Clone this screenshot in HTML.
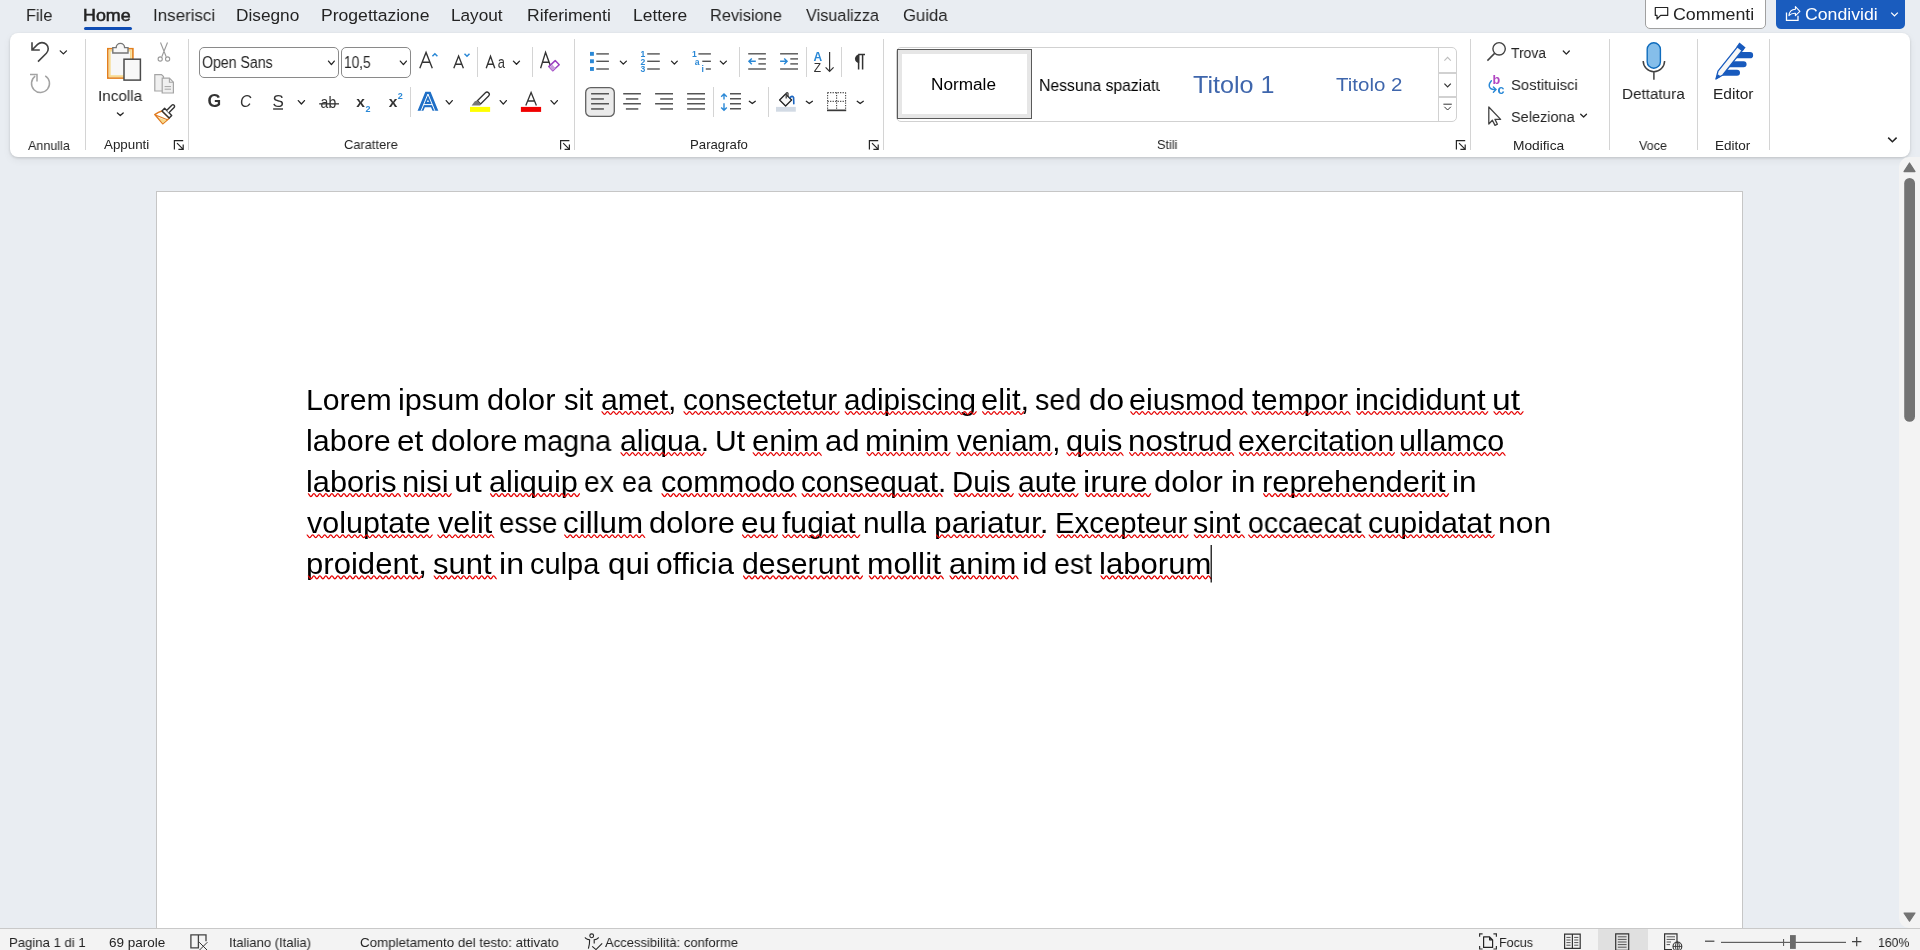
<!DOCTYPE html>
<html><head><meta charset="utf-8"><title>Word</title>
<style>
html,body{margin:0;padding:0;}
body{width:1920px;height:950px;overflow:hidden;position:relative;background:#E9EDF2;font-family:"Liberation Sans",sans-serif;}
.t{position:absolute;white-space:pre;line-height:1;transform-origin:0 0;will-change:transform;}
svg{will-change:transform}
svg{overflow:visible}
</style></head><body>
<div class="t" style="left:26.17px;top:6.74px;font-size:17.2px;color:#242424;transform:scaleX(0.9491);">File</div>
<div class="t" style="left:83.35px;top:6.74px;font-size:17.2px;color:#242424;transform:scaleX(1.0389);-webkit-text-stroke:0.55px #242424;">Home</div>
<div class="t" style="left:152.67px;top:6.74px;font-size:17.2px;color:#242424;transform:scaleX(0.9867);">Inserisci</div>
<div class="t" style="left:236.09px;top:6.74px;font-size:17.2px;color:#242424;transform:scaleX(1.0041);">Disegno</div>
<div class="t" style="left:321.07px;top:6.74px;font-size:17.2px;color:#242424;transform:scaleX(1.0221);">Progettazione</div>
<div class="t" style="left:450.60px;top:6.74px;font-size:17.2px;color:#242424;">Layout</div>
<div class="t" style="left:526.97px;top:6.74px;font-size:17.2px;color:#242424;transform:scaleX(1.0201);">Riferimenti</div>
<div class="t" style="left:632.98px;top:6.74px;font-size:17.2px;color:#242424;transform:scaleX(1.0136);">Lettere</div>
<div class="t" style="left:710.37px;top:6.74px;font-size:17.2px;color:#242424;transform:scaleX(0.9516);">Revisione</div>
<div class="t" style="left:806.16px;top:6.74px;font-size:17.2px;color:#242424;transform:scaleX(0.9474);">Visualizza</div>
<div class="t" style="left:902.57px;top:6.74px;font-size:17.2px;color:#242424;transform:scaleX(0.9723);">Guida</div>
<div style="position:absolute;left:84px;top:27px;width:48px;height:3px;border-radius:2px;background:#0F4DB4"></div>
<div style="position:absolute;left:1644.5px;top:-6px;width:119px;height:33px;border:1px solid #A0A0A0;border-radius:5px;background:#fff;box-sizing:content-box"></div>
<div class="t" style="left:1673.49px;top:6.75px;font-size:16.6px;color:#242424;transform:scaleX(1.0740);">Commenti</div>
<div style="position:absolute;left:1776px;top:-6px;width:129px;height:35px;border-radius:5px;background:#1A5CBE"></div>
<div class="t" style="left:1805.29px;top:6.75px;font-size:16.6px;color:#fff;transform:scaleX(1.0664);">Condividi</div>
<div style="position:absolute;left:10px;top:33px;width:1900px;height:124px;border-radius:8px;background:#fff;box-shadow:0 1px 3px rgba(0,0,0,0.16),0 3px 8px rgba(0,0,0,0.06)"></div>
<div style="position:absolute;left:84.5px;top:39px;width:1px;height:111px;background:#D4D4D4"></div>
<div style="position:absolute;left:188.0px;top:39px;width:1px;height:111px;background:#D4D4D4"></div>
<div style="position:absolute;left:574.0px;top:39px;width:1px;height:111px;background:#D4D4D4"></div>
<div style="position:absolute;left:882.5px;top:39px;width:1px;height:111px;background:#D4D4D4"></div>
<div style="position:absolute;left:1470.3px;top:39px;width:1px;height:111px;background:#D4D4D4"></div>
<div style="position:absolute;left:1609.2px;top:39px;width:1px;height:111px;background:#D4D4D4"></div>
<div style="position:absolute;left:1697.2px;top:39px;width:1px;height:111px;background:#D4D4D4"></div>
<div style="position:absolute;left:1769.0px;top:39px;width:1px;height:111px;background:#D4D4D4"></div>
<div style="position:absolute;left:477.1px;top:47.4px;width:1px;height:29.3px;background:#D4D4D4"></div>
<div style="position:absolute;left:531.8px;top:47.4px;width:1px;height:29.3px;background:#D4D4D4"></div>
<div style="position:absolute;left:410.0px;top:87.0px;width:1px;height:29.8px;background:#D4D4D4"></div>
<div style="position:absolute;left:739.3px;top:47.0px;width:1px;height:29.7px;background:#D4D4D4"></div>
<div style="position:absolute;left:806.3px;top:47.0px;width:1px;height:29.7px;background:#D4D4D4"></div>
<div style="position:absolute;left:841.1px;top:47.0px;width:1px;height:29.7px;background:#D4D4D4"></div>
<div style="position:absolute;left:713.1px;top:87.0px;width:1px;height:29.6px;background:#D4D4D4"></div>
<div style="position:absolute;left:768.0px;top:87.0px;width:1px;height:29.6px;background:#D4D4D4"></div>
<div class="t" style="left:27.95px;top:138.73px;font-size:13.2px;color:#242424;transform:scaleX(0.9500);">Annulla</div>
<div class="t" style="left:103.95px;top:137.73px;font-size:13.2px;color:#242424;transform:scaleX(1.0125);">Appunti</div>
<div class="t" style="left:344.17px;top:137.73px;font-size:13.2px;color:#242424;transform:scaleX(0.9758);">Carattere</div>
<div class="t" style="left:689.80px;top:137.73px;font-size:13.2px;color:#242424;">Paragrafo</div>
<div class="t" style="left:1156.72px;top:137.73px;font-size:13.2px;color:#242424;transform:scaleX(0.9646);">Stili</div>
<div class="t" style="left:1513.45px;top:138.73px;font-size:13.2px;color:#242424;transform:scaleX(1.0427);">Modifica</div>
<div class="t" style="left:1639.15px;top:138.73px;font-size:13.2px;color:#242424;transform:scaleX(0.9512);">Voce</div>
<div class="t" style="left:1715.27px;top:138.73px;font-size:13.2px;color:#242424;transform:scaleX(1.0241);">Editor</div>
<div class="t" style="left:98.17px;top:87.78px;font-size:15.5px;color:#242424;transform:scaleX(0.9839);">Incolla</div>
<div class="t" style="left:1621.77px;top:85.88px;font-size:15.5px;color:#242424;transform:scaleX(0.9832);">Dettatura</div>
<div class="t" style="left:1713.15px;top:85.88px;font-size:15.5px;color:#242424;">Editor</div>
<div style="position:absolute;left:199px;top:47px;width:138px;height:29px;border:1px solid #8A8A8A;border-radius:5px;background:#fff"></div>
<div class="t" style="left:201.64px;top:54.56px;font-size:16px;color:#242424;transform:scaleX(0.8825);">Open Sans</div>
<div style="position:absolute;left:341px;top:47px;width:68px;height:29px;border:1px solid #8A8A8A;border-radius:5px;background:#fff"></div>
<div class="t" style="left:344.18px;top:54.56px;font-size:16px;color:#242424;transform:scaleX(0.8532);">10,5</div>
<div style="position:absolute;left:895.5px;top:47px;width:559.5px;height:73px;border:1px solid #D1D1D1;border-radius:5px;background:#fff"></div>
<div style="position:absolute;left:1437.8px;top:47px;width:1px;height:74px;background:#D1D1D1"></div>
<div style="position:absolute;left:1438.5px;top:72px;width:18px;height:1.5px;background:#D1D1D1"></div>
<div style="position:absolute;left:1438.5px;top:96px;width:18px;height:1.5px;background:#D1D1D1"></div>
<div style="position:absolute;left:897px;top:49px;width:133px;height:68px;border:1px solid #5A5A5A;box-shadow:inset 0 0 0 4px #E6E6E6;background:#fff"></div>
<div class="t" style="left:931.40px;top:77.46px;font-size:16px;color:#000;transform:scaleX(1.0744);">Normale</div>
<div style="position:absolute;left:1036px;top:61px;width:123.5px;height:50px;overflow:hidden"><div class="t" style="left:2.94px;top:16.29px;font-size:16.2px;color:#000;transform:scaleX(0.9717);">Nessuna spaziatura</div></div>
<div class="t" style="left:1193.06px;top:73.99px;font-size:23.4px;color:#3F66AC;transform:scaleX(1.0747);">Titolo 1</div>
<div class="t" style="left:1335.92px;top:75.15px;font-size:19.2px;color:#3F66AC;transform:scaleX(1.0674);">Titolo 2</div>
<div class="t" style="left:1511.19px;top:45.08px;font-size:15.5px;color:#242424;transform:scaleX(0.8955);">Trova</div>
<div class="t" style="left:1510.83px;top:77.48px;font-size:15.5px;color:#242424;transform:scaleX(0.9581);">Sostituisci</div>
<div class="t" style="left:1510.85px;top:109.08px;font-size:15.5px;color:#242424;transform:scaleX(0.9347);">Seleziona</div>
<div style="position:absolute;left:156px;top:191px;width:1585px;height:800px;border:1px solid #C6C6C6;background:#fff"></div>
<div style="position:absolute;left:1899px;top:157px;width:21px;height:771px;background:#F3F3F3;border-radius:10px 0 0 10px"></div>
<svg style="position:absolute;left:1899px;top:157px" width="21" height="771"><path d="M5,14.6 L10.5,6 L16,14.6 Z" fill="#737373" stroke="#737373" stroke-width="1.2" stroke-linejoin="round"/><rect x="5.2" y="21" width="10.8" height="243.8" rx="5.4" fill="#737373"/><path d="M5,756 L10.5,764.2 L16,756 Z" fill="#737373" stroke="#737373" stroke-width="1.2" stroke-linejoin="round"/></svg>
<div style="position:absolute;left:0;top:928px;width:1920px;height:22px;background:#F3F3F3;border-top:1px solid #C9C9C9;box-sizing:border-box"></div>
<div class="t" style="left:8.93px;top:936.17px;font-size:13.5px;color:#242424;transform:scaleX(0.9734);">Pagina 1 di 1</div>
<div class="t" style="left:109.30px;top:936.17px;font-size:13.5px;color:#242424;">69 parole</div>
<div class="t" style="left:228.79px;top:936.17px;font-size:13.5px;color:#242424;transform:scaleX(0.9674);">Italiano (Italia)</div>
<div class="t" style="left:360.31px;top:936.17px;font-size:13.5px;color:#242424;transform:scaleX(0.9882);">Completamento del testo: attivato</div>
<div class="t" style="left:604.95px;top:936.17px;font-size:13.5px;color:#242424;transform:scaleX(0.9643);">Accessibilità: conforme</div>
<div class="t" style="left:1498.98px;top:936.17px;font-size:13.5px;color:#242424;transform:scaleX(0.9246);">Focus</div>
<div class="t" style="left:1877.84px;top:936.17px;font-size:13.5px;color:#242424;transform:scaleX(0.9077);">160%</div>
<div style="position:absolute;left:1598px;top:929px;width:50px;height:21px;background:#E0E0E0"></div>
<div class="t" style="left:306.30px;top:385.85px;font-size:29px;color:#000;transform:scaleX(1.0423);">Lorem</div>
<div class="t" style="left:398.34px;top:385.85px;font-size:29px;color:#000;transform:scaleX(1.0558);">ipsum</div>
<div class="t" style="left:487.23px;top:385.85px;font-size:29px;color:#000;transform:scaleX(1.0613);">dolor</div>
<div class="t" style="left:563.80px;top:385.85px;font-size:29px;color:#000;transform:scaleX(1.0036);">sit</div>
<div class="t" style="left:600.70px;top:385.85px;font-size:29px;color:#000;transform:scaleX(1.0401);">amet,</div>
<div class="t" style="left:682.71px;top:385.85px;font-size:29px;color:#000;transform:scaleX(1.0283);">consectetur</div>
<div class="t" style="left:843.92px;top:385.85px;font-size:29px;color:#000;transform:scaleX(1.0234);">adipiscing</div>
<div class="t" style="left:981.27px;top:385.85px;font-size:29px;color:#000;transform:scaleX(1.0667);">elit,</div>
<div class="t" style="left:1035.01px;top:385.85px;font-size:29px;color:#000;transform:scaleX(0.9864);">sed</div>
<div class="t" style="left:1088.69px;top:385.85px;font-size:29px;color:#000;transform:scaleX(1.0921);">do</div>
<div class="t" style="left:1129.48px;top:385.85px;font-size:29px;color:#000;transform:scaleX(1.0535);">eiusmod</div>
<div class="t" style="left:1251.52px;top:385.85px;font-size:29px;color:#000;transform:scaleX(1.0632);">tempor</div>
<div class="t" style="left:1354.62px;top:385.85px;font-size:29px;color:#000;transform:scaleX(1.0652);">incididunt</div>
<div class="t" style="left:1491.80px;top:385.85px;font-size:29px;color:#000;transform:scaleX(1.1584);">ut</div>
<div class="t" style="left:306.35px;top:426.95px;font-size:29px;color:#000;transform:scaleX(1.0517);">labore</div>
<div class="t" style="left:397.34px;top:426.95px;font-size:29px;color:#000;transform:scaleX(1.0857);">et</div>
<div class="t" style="left:430.51px;top:426.95px;font-size:29px;color:#000;transform:scaleX(1.0723);">dolore</div>
<div class="t" style="left:523.31px;top:426.95px;font-size:29px;color:#000;transform:scaleX(0.9942);">magna</div>
<div class="t" style="left:619.70px;top:426.95px;font-size:29px;color:#000;transform:scaleX(1.0423);">aliqua.</div>
<div class="t" style="left:714.57px;top:426.95px;font-size:29px;color:#000;transform:scaleX(1.0358);">Ut</div>
<div class="t" style="left:751.87px;top:426.95px;font-size:29px;color:#000;transform:scaleX(1.0637);">enim</div>
<div class="t" style="left:824.86px;top:426.95px;font-size:29px;color:#000;transform:scaleX(1.0703);">ad</div>
<div class="t" style="left:864.93px;top:426.95px;font-size:29px;color:#000;transform:scaleX(1.0912);">minim</div>
<div class="t" style="left:956.70px;top:426.95px;font-size:29px;color:#000;transform:scaleX(1.0177);">veniam,</div>
<div class="t" style="left:1065.73px;top:426.95px;font-size:29px;color:#000;transform:scaleX(1.0599);">quis</div>
<div class="t" style="left:1127.55px;top:426.95px;font-size:29px;color:#000;transform:scaleX(1.0780);">nostrud</div>
<div class="t" style="left:1238.08px;top:426.95px;font-size:29px;color:#000;transform:scaleX(1.0527);">exercitation</div>
<div class="t" style="left:1399.00px;top:426.95px;font-size:29px;color:#000;transform:scaleX(1.0527);">ullamco</div>
<div class="t" style="left:306.33px;top:468.05px;font-size:29px;color:#000;transform:scaleX(1.0600);">laboris</div>
<div class="t" style="left:402.17px;top:468.05px;font-size:29px;color:#000;transform:scaleX(1.0694);">nisi</div>
<div class="t" style="left:453.53px;top:468.05px;font-size:29px;color:#000;transform:scaleX(1.1403);">ut</div>
<div class="t" style="left:489.18px;top:468.05px;font-size:29px;color:#000;transform:scaleX(1.0596);">aliquip</div>
<div class="t" style="left:584.39px;top:468.05px;font-size:29px;color:#000;transform:scaleX(0.9691);">ex</div>
<div class="t" style="left:622.24px;top:468.05px;font-size:29px;color:#000;transform:scaleX(0.9275);">ea</div>
<div class="t" style="left:660.68px;top:468.05px;font-size:29px;color:#000;transform:scaleX(1.0549);">commodo</div>
<div class="t" style="left:800.82px;top:468.05px;font-size:29px;color:#000;transform:scaleX(1.0246);">consequat.</div>
<div class="t" style="left:951.93px;top:468.05px;font-size:29px;color:#000;transform:scaleX(1.0092);">Duis</div>
<div class="t" style="left:1017.70px;top:468.05px;font-size:29px;color:#000;transform:scaleX(1.0427);">aute</div>
<div class="t" style="left:1083.43px;top:468.05px;font-size:29px;color:#000;transform:scaleX(1.1150);">irure</div>
<div class="t" style="left:1153.72px;top:468.05px;font-size:29px;color:#000;transform:scaleX(1.0660);">dolor</div>
<div class="t" style="left:1230.89px;top:468.05px;font-size:29px;color:#000;transform:scaleX(1.0827);">in</div>
<div class="t" style="left:1261.58px;top:468.05px;font-size:29px;color:#000;transform:scaleX(1.0646);">reprehenderit</div>
<div class="t" style="left:1452.38px;top:468.05px;font-size:29px;color:#000;transform:scaleX(1.0880);">in</div>
<div class="t" style="left:307.09px;top:509.15px;font-size:29px;color:#000;transform:scaleX(1.0507);">voluptate</div>
<div class="t" style="left:437.69px;top:509.15px;font-size:29px;color:#000;transform:scaleX(1.0517);">velit</div>
<div class="t" style="left:498.81px;top:509.15px;font-size:29px;color:#000;transform:scaleX(0.9515);">esse</div>
<div class="t" style="left:563.35px;top:509.15px;font-size:29px;color:#000;transform:scaleX(1.0810);">cillum</div>
<div class="t" style="left:648.52px;top:509.15px;font-size:29px;color:#000;transform:scaleX(1.0672);">dolore</div>
<div class="t" style="left:741.13px;top:509.15px;font-size:29px;color:#000;transform:scaleX(1.0928);">eu</div>
<div class="t" style="left:782.28px;top:509.15px;font-size:29px;color:#000;transform:scaleX(1.0391);">fugiat</div>
<div class="t" style="left:863.45px;top:509.15px;font-size:29px;color:#000;transform:scaleX(1.0286);">nulla</div>
<div class="t" style="left:934.48px;top:509.15px;font-size:29px;color:#000;transform:scaleX(1.0937);">pariatur.</div>
<div class="t" style="left:1054.62px;top:509.15px;font-size:29px;color:#000;transform:scaleX(1.0129);">Excepteur</div>
<div class="t" style="left:1193.46px;top:509.15px;font-size:29px;color:#000;transform:scaleX(1.0499);">sint</div>
<div class="t" style="left:1247.53px;top:509.15px;font-size:29px;color:#000;transform:scaleX(0.9778);">occaecat</div>
<div class="t" style="left:1367.89px;top:509.15px;font-size:29px;color:#000;transform:scaleX(1.0512);">cupidatat</div>
<div class="t" style="left:1497.71px;top:509.15px;font-size:29px;color:#000;transform:scaleX(1.1009);">non</div>
<div class="t" style="left:306.42px;top:550.25px;font-size:29px;color:#000;transform:scaleX(1.0720);">proident,</div>
<div class="t" style="left:433.34px;top:550.25px;font-size:29px;color:#000;transform:scaleX(1.0688);">sunt</div>
<div class="t" style="left:498.64px;top:550.25px;font-size:29px;color:#000;transform:scaleX(1.1093);">in</div>
<div class="t" style="left:529.95px;top:550.25px;font-size:29px;color:#000;">culpa</div>
<div class="t" style="left:607.70px;top:550.25px;font-size:29px;color:#000;transform:scaleX(1.0802);">qui</div>
<div class="t" style="left:655.76px;top:550.25px;font-size:29px;color:#000;transform:scaleX(1.0344);">officia</div>
<div class="t" style="left:742.25px;top:550.25px;font-size:29px;color:#000;transform:scaleX(1.0426);">deserunt</div>
<div class="t" style="left:867.22px;top:550.25px;font-size:29px;color:#000;transform:scaleX(1.0938);">mollit</div>
<div class="t" style="left:948.66px;top:550.25px;font-size:29px;color:#000;transform:scaleX(1.0704);">anim</div>
<div class="t" style="left:1021.54px;top:550.25px;font-size:29px;color:#000;transform:scaleX(1.1333);">id</div>
<div class="t" style="left:1053.78px;top:550.25px;font-size:29px;color:#000;transform:scaleX(0.9799);">est</div>
<div class="t" style="left:1098.91px;top:550.25px;font-size:29px;color:#000;transform:scaleX(1.0723);">laborum</div>
<svg style="position:absolute;left:0;top:0" width="1920" height="950"><path fill="none" stroke="#E60000" stroke-width="1.25" d="M601.5,411.50C603.0,411.50 603.0,414.40 604.5,414.40C606.0,414.40 606.0,411.50 607.5,411.50C609.0,411.50 609.0,414.40 610.5,414.40C612.0,414.40 612.0,411.50 613.5,411.50C615.0,411.50 615.0,414.40 616.5,414.40C618.0,414.40 618.0,411.50 619.5,411.50C621.0,411.50 621.0,414.40 622.5,414.40C624.0,414.40 624.0,411.50 625.5,411.50C627.0,411.50 627.0,414.40 628.5,414.40C630.0,414.40 630.0,411.50 631.5,411.50C633.0,411.50 633.0,414.40 634.5,414.40C636.0,414.40 636.0,411.50 637.5,411.50C639.0,411.50 639.0,414.40 640.5,414.40C642.0,414.40 642.0,411.50 643.5,411.50C645.0,411.50 645.0,414.40 646.5,414.40C648.0,414.40 648.0,411.50 649.5,411.50C651.0,411.50 651.0,414.40 652.5,414.40C654.0,414.40 654.0,411.50 655.5,411.50C657.0,411.50 657.0,414.40 658.5,414.40C660.0,414.40 660.0,411.50 661.5,411.50C663.0,411.50 663.0,414.40 664.5,414.40C666.0,414.40 666.0,411.50 667.5,411.50C669.0,411.50 669.0,414.40 670.5,414.40M683.5,411.50C685.0,411.50 685.0,414.40 686.5,414.40C688.0,414.40 688.0,411.50 689.5,411.50C691.0,411.50 691.0,414.40 692.5,414.40C694.0,414.40 694.0,411.50 695.5,411.50C697.0,411.50 697.0,414.40 698.5,414.40C700.0,414.40 700.0,411.50 701.5,411.50C703.0,411.50 703.0,414.40 704.5,414.40C706.0,414.40 706.0,411.50 707.5,411.50C709.0,411.50 709.0,414.40 710.5,414.40C712.0,414.40 712.0,411.50 713.5,411.50C715.0,411.50 715.0,414.40 716.5,414.40C718.0,414.40 718.0,411.50 719.5,411.50C721.0,411.50 721.0,414.40 722.5,414.40C724.0,414.40 724.0,411.50 725.5,411.50C727.0,411.50 727.0,414.40 728.5,414.40C730.0,414.40 730.0,411.50 731.5,411.50C733.0,411.50 733.0,414.40 734.5,414.40C736.0,414.40 736.0,411.50 737.5,411.50C739.0,411.50 739.0,414.40 740.5,414.40C742.0,414.40 742.0,411.50 743.5,411.50C745.0,411.50 745.0,414.40 746.5,414.40C748.0,414.40 748.0,411.50 749.5,411.50C751.0,411.50 751.0,414.40 752.5,414.40C754.0,414.40 754.0,411.50 755.5,411.50C757.0,411.50 757.0,414.40 758.5,414.40C760.0,414.40 760.0,411.50 761.5,411.50C763.0,411.50 763.0,414.40 764.5,414.40C766.0,414.40 766.0,411.50 767.5,411.50C769.0,411.50 769.0,414.40 770.5,414.40C772.0,414.40 772.0,411.50 773.5,411.50C775.0,411.50 775.0,414.40 776.5,414.40C778.0,414.40 778.0,411.50 779.5,411.50C781.0,411.50 781.0,414.40 782.5,414.40C784.0,414.40 784.0,411.50 785.5,411.50C787.0,411.50 787.0,414.40 788.5,414.40C790.0,414.40 790.0,411.50 791.5,411.50C793.0,411.50 793.0,414.40 794.5,414.40C796.0,414.40 796.0,411.50 797.5,411.50C799.0,411.50 799.0,414.40 800.5,414.40C802.0,414.40 802.0,411.50 803.5,411.50C805.0,411.50 805.0,414.40 806.5,414.40C808.0,414.40 808.0,411.50 809.5,411.50C811.0,411.50 811.0,414.40 812.5,414.40C814.0,414.40 814.0,411.50 815.5,411.50C817.0,411.50 817.0,414.40 818.5,414.40C820.0,414.40 820.0,411.50 821.5,411.50C823.0,411.50 823.0,414.40 824.5,414.40C826.0,414.40 826.0,411.50 827.5,411.50C829.0,411.50 829.0,414.40 830.5,414.40C832.0,414.40 832.0,411.50 833.5,411.50C835.0,411.50 835.0,414.40 836.5,414.40C838.0,414.40 838.0,411.50 839.5,411.50M844.7,411.50C846.2,411.50 846.2,414.40 847.7,414.40C849.2,414.40 849.2,411.50 850.7,411.50C852.2,411.50 852.2,414.40 853.7,414.40C855.2,414.40 855.2,411.50 856.7,411.50C858.2,411.50 858.2,414.40 859.7,414.40C861.2,414.40 861.2,411.50 862.7,411.50C864.2,411.50 864.2,414.40 865.7,414.40C867.2,414.40 867.2,411.50 868.7,411.50C870.2,411.50 870.2,414.40 871.7,414.40C873.2,414.40 873.2,411.50 874.7,411.50C876.2,411.50 876.2,414.40 877.7,414.40C879.2,414.40 879.2,411.50 880.7,411.50C882.2,411.50 882.2,414.40 883.7,414.40C885.2,414.40 885.2,411.50 886.7,411.50C888.2,411.50 888.2,414.40 889.7,414.40C891.2,414.40 891.2,411.50 892.7,411.50C894.2,411.50 894.2,414.40 895.7,414.40C897.2,414.40 897.2,411.50 898.7,411.50C900.2,411.50 900.2,414.40 901.7,414.40C903.2,414.40 903.2,411.50 904.7,411.50C906.2,411.50 906.2,414.40 907.7,414.40C909.2,414.40 909.2,411.50 910.7,411.50C912.2,411.50 912.2,414.40 913.7,414.40C915.2,414.40 915.2,411.50 916.7,411.50C918.2,411.50 918.2,414.40 919.7,414.40C921.2,414.40 921.2,411.50 922.7,411.50C924.2,411.50 924.2,414.40 925.7,414.40C927.2,414.40 927.2,411.50 928.7,411.50C930.2,411.50 930.2,414.40 931.7,414.40C933.2,414.40 933.2,411.50 934.7,411.50C936.2,411.50 936.2,414.40 937.7,414.40C939.2,414.40 939.2,411.50 940.7,411.50C942.2,411.50 942.2,414.40 943.7,414.40C945.2,414.40 945.2,411.50 946.7,411.50C948.2,411.50 948.2,414.40 949.7,414.40C951.2,414.40 951.2,411.50 952.7,411.50C954.2,411.50 954.2,414.40 955.7,414.40C957.2,414.40 957.2,411.50 958.7,411.50C960.2,411.50 960.2,414.40 961.7,414.40C963.2,414.40 963.2,411.50 964.7,411.50C966.2,411.50 966.2,414.40 967.7,414.40C969.2,414.40 969.2,411.50 970.7,411.50C972.2,411.50 972.2,414.40 973.7,414.40C975.2,414.40 975.2,411.50 976.7,411.50M982.1,411.50C983.6,411.50 983.6,414.40 985.1,414.40C986.6,414.40 986.6,411.50 988.1,411.50C989.6,411.50 989.6,414.40 991.1,414.40C992.6,414.40 992.6,411.50 994.1,411.50C995.6,411.50 995.6,414.40 997.1,414.40C998.6,414.40 998.6,411.50 1000.1,411.50C1001.6,411.50 1001.6,414.40 1003.1,414.40C1004.6,414.40 1004.6,411.50 1006.1,411.50C1007.6,411.50 1007.6,414.40 1009.1,414.40C1010.6,414.40 1010.6,411.50 1012.1,411.50C1013.6,411.50 1013.6,414.40 1015.1,414.40C1016.6,414.40 1016.6,411.50 1018.1,411.50C1019.6,411.50 1019.6,414.40 1021.1,414.40C1022.6,414.40 1022.6,411.50 1024.1,411.50M1130.3,411.50C1131.8,411.50 1131.8,414.40 1133.3,414.40C1134.8,414.40 1134.8,411.50 1136.3,411.50C1137.8,411.50 1137.8,414.40 1139.3,414.40C1140.8,414.40 1140.8,411.50 1142.3,411.50C1143.8,411.50 1143.8,414.40 1145.3,414.40C1146.8,414.40 1146.8,411.50 1148.3,411.50C1149.8,411.50 1149.8,414.40 1151.3,414.40C1152.8,414.40 1152.8,411.50 1154.3,411.50C1155.8,411.50 1155.8,414.40 1157.3,414.40C1158.8,414.40 1158.8,411.50 1160.3,411.50C1161.8,411.50 1161.8,414.40 1163.3,414.40C1164.8,414.40 1164.8,411.50 1166.3,411.50C1167.8,411.50 1167.8,414.40 1169.3,414.40C1170.8,414.40 1170.8,411.50 1172.3,411.50C1173.8,411.50 1173.8,414.40 1175.3,414.40C1176.8,414.40 1176.8,411.50 1178.3,411.50C1179.8,411.50 1179.8,414.40 1181.3,414.40C1182.8,414.40 1182.8,411.50 1184.3,411.50C1185.8,411.50 1185.8,414.40 1187.3,414.40C1188.8,414.40 1188.8,411.50 1190.3,411.50C1191.8,411.50 1191.8,414.40 1193.3,414.40C1194.8,414.40 1194.8,411.50 1196.3,411.50C1197.8,411.50 1197.8,414.40 1199.3,414.40C1200.8,414.40 1200.8,411.50 1202.3,411.50C1203.8,411.50 1203.8,414.40 1205.3,414.40C1206.8,414.40 1206.8,411.50 1208.3,411.50C1209.8,411.50 1209.8,414.40 1211.3,414.40C1212.8,414.40 1212.8,411.50 1214.3,411.50C1215.8,411.50 1215.8,414.40 1217.3,414.40C1218.8,414.40 1218.8,411.50 1220.3,411.50C1221.8,411.50 1221.8,414.40 1223.3,414.40C1224.8,414.40 1224.8,411.50 1226.3,411.50C1227.8,411.50 1227.8,414.40 1229.3,414.40C1230.8,414.40 1230.8,411.50 1232.3,411.50C1233.8,411.50 1233.8,414.40 1235.3,414.40C1236.8,414.40 1236.8,411.50 1238.3,411.50C1239.8,411.50 1239.8,414.40 1241.3,414.40C1242.8,414.40 1242.8,411.50 1244.3,411.50C1245.8,411.50 1245.8,414.40 1247.3,414.40M1251.5,411.50C1253.0,411.50 1253.0,414.40 1254.5,414.40C1256.0,414.40 1256.0,411.50 1257.5,411.50C1259.0,411.50 1259.0,414.40 1260.5,414.40C1262.0,414.40 1262.0,411.50 1263.5,411.50C1265.0,411.50 1265.0,414.40 1266.5,414.40C1268.0,414.40 1268.0,411.50 1269.5,411.50C1271.0,411.50 1271.0,414.40 1272.5,414.40C1274.0,414.40 1274.0,411.50 1275.5,411.50C1277.0,411.50 1277.0,414.40 1278.5,414.40C1280.0,414.40 1280.0,411.50 1281.5,411.50C1283.0,411.50 1283.0,414.40 1284.5,414.40C1286.0,414.40 1286.0,411.50 1287.5,411.50C1289.0,411.50 1289.0,414.40 1290.5,414.40C1292.0,414.40 1292.0,411.50 1293.5,411.50C1295.0,411.50 1295.0,414.40 1296.5,414.40C1298.0,414.40 1298.0,411.50 1299.5,411.50C1301.0,411.50 1301.0,414.40 1302.5,414.40C1304.0,414.40 1304.0,411.50 1305.5,411.50C1307.0,411.50 1307.0,414.40 1308.5,414.40C1310.0,414.40 1310.0,411.50 1311.5,411.50C1313.0,411.50 1313.0,414.40 1314.5,414.40C1316.0,414.40 1316.0,411.50 1317.5,411.50C1319.0,411.50 1319.0,414.40 1320.5,414.40C1322.0,414.40 1322.0,411.50 1323.5,411.50C1325.0,411.50 1325.0,414.40 1326.5,414.40C1328.0,414.40 1328.0,411.50 1329.5,411.50C1331.0,411.50 1331.0,414.40 1332.5,414.40C1334.0,414.40 1334.0,411.50 1335.5,411.50C1337.0,411.50 1337.0,414.40 1338.5,414.40C1340.0,414.40 1340.0,411.50 1341.5,411.50C1343.0,411.50 1343.0,414.40 1344.5,414.40C1346.0,414.40 1346.0,411.50 1347.5,411.50C1349.0,411.50 1349.0,414.40 1350.5,414.40M1356.2,411.50C1357.7,411.50 1357.7,414.40 1359.2,414.40C1360.7,414.40 1360.7,411.50 1362.2,411.50C1363.7,411.50 1363.7,414.40 1365.2,414.40C1366.7,414.40 1366.7,411.50 1368.2,411.50C1369.7,411.50 1369.7,414.40 1371.2,414.40C1372.7,414.40 1372.7,411.50 1374.2,411.50C1375.7,411.50 1375.7,414.40 1377.2,414.40C1378.7,414.40 1378.7,411.50 1380.2,411.50C1381.7,411.50 1381.7,414.40 1383.2,414.40C1384.7,414.40 1384.7,411.50 1386.2,411.50C1387.7,411.50 1387.7,414.40 1389.2,414.40C1390.7,414.40 1390.7,411.50 1392.2,411.50C1393.7,411.50 1393.7,414.40 1395.2,414.40C1396.7,414.40 1396.7,411.50 1398.2,411.50C1399.7,411.50 1399.7,414.40 1401.2,414.40C1402.7,414.40 1402.7,411.50 1404.2,411.50C1405.7,411.50 1405.7,414.40 1407.2,414.40C1408.7,414.40 1408.7,411.50 1410.2,411.50C1411.7,411.50 1411.7,414.40 1413.2,414.40C1414.7,414.40 1414.7,411.50 1416.2,411.50C1417.7,411.50 1417.7,414.40 1419.2,414.40C1420.7,414.40 1420.7,411.50 1422.2,411.50C1423.7,411.50 1423.7,414.40 1425.2,414.40C1426.7,414.40 1426.7,411.50 1428.2,411.50C1429.7,411.50 1429.7,414.40 1431.2,414.40C1432.7,414.40 1432.7,411.50 1434.2,411.50C1435.7,411.50 1435.7,414.40 1437.2,414.40C1438.7,414.40 1438.7,411.50 1440.2,411.50C1441.7,411.50 1441.7,414.40 1443.2,414.40C1444.7,414.40 1444.7,411.50 1446.2,411.50C1447.7,411.50 1447.7,414.40 1449.2,414.40C1450.7,414.40 1450.7,411.50 1452.2,411.50C1453.7,411.50 1453.7,414.40 1455.2,414.40C1456.7,414.40 1456.7,411.50 1458.2,411.50C1459.7,411.50 1459.7,414.40 1461.2,414.40C1462.7,414.40 1462.7,411.50 1464.2,411.50C1465.7,411.50 1465.7,414.40 1467.2,414.40C1468.7,414.40 1468.7,411.50 1470.2,411.50C1471.7,411.50 1471.7,414.40 1473.2,414.40C1474.7,414.40 1474.7,411.50 1476.2,411.50C1477.7,411.50 1477.7,414.40 1479.2,414.40C1480.7,414.40 1480.7,411.50 1482.2,411.50C1483.7,411.50 1483.7,414.40 1485.2,414.40C1486.7,414.40 1486.7,411.50 1488.2,411.50M1493.5,411.50C1495.0,411.50 1495.0,414.40 1496.5,414.40C1498.0,414.40 1498.0,411.50 1499.5,411.50C1501.0,411.50 1501.0,414.40 1502.5,414.40C1504.0,414.40 1504.0,411.50 1505.5,411.50C1507.0,411.50 1507.0,414.40 1508.5,414.40C1510.0,414.40 1510.0,411.50 1511.5,411.50C1513.0,411.50 1513.0,414.40 1514.5,414.40C1516.0,414.40 1516.0,411.50 1517.5,411.50C1519.0,411.50 1519.0,414.40 1520.5,414.40C1522.0,414.40 1522.0,411.50 1523.5,411.50M620.5,452.60C622.0,452.60 622.0,455.50 623.5,455.50C625.0,455.50 625.0,452.60 626.5,452.60C628.0,452.60 628.0,455.50 629.5,455.50C631.0,455.50 631.0,452.60 632.5,452.60C634.0,452.60 634.0,455.50 635.5,455.50C637.0,455.50 637.0,452.60 638.5,452.60C640.0,452.60 640.0,455.50 641.5,455.50C643.0,455.50 643.0,452.60 644.5,452.60C646.0,452.60 646.0,455.50 647.5,455.50C649.0,455.50 649.0,452.60 650.5,452.60C652.0,452.60 652.0,455.50 653.5,455.50C655.0,455.50 655.0,452.60 656.5,452.60C658.0,452.60 658.0,455.50 659.5,455.50C661.0,455.50 661.0,452.60 662.5,452.60C664.0,452.60 664.0,455.50 665.5,455.50C667.0,455.50 667.0,452.60 668.5,452.60C670.0,452.60 670.0,455.50 671.5,455.50C673.0,455.50 673.0,452.60 674.5,452.60C676.0,452.60 676.0,455.50 677.5,455.50C679.0,455.50 679.0,452.60 680.5,452.60C682.0,452.60 682.0,455.50 683.5,455.50C685.0,455.50 685.0,452.60 686.5,452.60C688.0,452.60 688.0,455.50 689.5,455.50C691.0,455.50 691.0,452.60 692.5,452.60C694.0,452.60 694.0,455.50 695.5,455.50C697.0,455.50 697.0,452.60 698.5,452.60C700.0,452.60 700.0,455.50 701.5,455.50C703.0,455.50 703.0,452.60 704.5,452.60M752.7,452.60C754.2,452.60 754.2,455.50 755.7,455.50C757.2,455.50 757.2,452.60 758.7,452.60C760.2,452.60 760.2,455.50 761.7,455.50C763.2,455.50 763.2,452.60 764.7,452.60C766.2,452.60 766.2,455.50 767.7,455.50C769.2,455.50 769.2,452.60 770.7,452.60C772.2,452.60 772.2,455.50 773.7,455.50C775.2,455.50 775.2,452.60 776.7,452.60C778.2,452.60 778.2,455.50 779.7,455.50C781.2,455.50 781.2,452.60 782.7,452.60C784.2,452.60 784.2,455.50 785.7,455.50C787.2,455.50 787.2,452.60 788.7,452.60C790.2,452.60 790.2,455.50 791.7,455.50C793.2,455.50 793.2,452.60 794.7,452.60C796.2,452.60 796.2,455.50 797.7,455.50C799.2,455.50 799.2,452.60 800.7,452.60C802.2,452.60 802.2,455.50 803.7,455.50C805.2,455.50 805.2,452.60 806.7,452.60C808.2,452.60 808.2,455.50 809.7,455.50C811.2,455.50 811.2,452.60 812.7,452.60C814.2,452.60 814.2,455.50 815.7,455.50C817.2,455.50 817.2,452.60 818.7,452.60C820.2,452.60 820.2,455.50 821.7,455.50M866.5,452.60C868.0,452.60 868.0,455.50 869.5,455.50C871.0,455.50 871.0,452.60 872.5,452.60C874.0,452.60 874.0,455.50 875.5,455.50C877.0,455.50 877.0,452.60 878.5,452.60C880.0,452.60 880.0,455.50 881.5,455.50C883.0,455.50 883.0,452.60 884.5,452.60C886.0,452.60 886.0,455.50 887.5,455.50C889.0,455.50 889.0,452.60 890.5,452.60C892.0,452.60 892.0,455.50 893.5,455.50C895.0,455.50 895.0,452.60 896.5,452.60C898.0,452.60 898.0,455.50 899.5,455.50C901.0,455.50 901.0,452.60 902.5,452.60C904.0,452.60 904.0,455.50 905.5,455.50C907.0,455.50 907.0,452.60 908.5,452.60C910.0,452.60 910.0,455.50 911.5,455.50C913.0,455.50 913.0,452.60 914.5,452.60C916.0,452.60 916.0,455.50 917.5,455.50C919.0,455.50 919.0,452.60 920.5,452.60C922.0,452.60 922.0,455.50 923.5,455.50C925.0,455.50 925.0,452.60 926.5,452.60C928.0,452.60 928.0,455.50 929.5,455.50C931.0,455.50 931.0,452.60 932.5,452.60C934.0,452.60 934.0,455.50 935.5,455.50C937.0,455.50 937.0,452.60 938.5,452.60C940.0,452.60 940.0,455.50 941.5,455.50C943.0,455.50 943.0,452.60 944.5,452.60C946.0,452.60 946.0,455.50 947.5,455.50C949.0,455.50 949.0,452.60 950.5,452.60M956.3,452.60C957.8,452.60 957.8,455.50 959.3,455.50C960.8,455.50 960.8,452.60 962.3,452.60C963.8,452.60 963.8,455.50 965.3,455.50C966.8,455.50 966.8,452.60 968.3,452.60C969.8,452.60 969.8,455.50 971.3,455.50C972.8,455.50 972.8,452.60 974.3,452.60C975.8,452.60 975.8,455.50 977.3,455.50C978.8,455.50 978.8,452.60 980.3,452.60C981.8,452.60 981.8,455.50 983.3,455.50C984.8,455.50 984.8,452.60 986.3,452.60C987.8,452.60 987.8,455.50 989.3,455.50C990.8,455.50 990.8,452.60 992.3,452.60C993.8,452.60 993.8,455.50 995.3,455.50C996.8,455.50 996.8,452.60 998.3,452.60C999.8,452.60 999.8,455.50 1001.3,455.50C1002.8,455.50 1002.8,452.60 1004.3,452.60C1005.8,452.60 1005.8,455.50 1007.3,455.50C1008.8,455.50 1008.8,452.60 1010.3,452.60C1011.8,452.60 1011.8,455.50 1013.3,455.50C1014.8,455.50 1014.8,452.60 1016.3,452.60C1017.8,452.60 1017.8,455.50 1019.3,455.50C1020.8,455.50 1020.8,452.60 1022.3,452.60C1023.8,452.60 1023.8,455.50 1025.3,455.50C1026.8,455.50 1026.8,452.60 1028.3,452.60C1029.8,452.60 1029.8,455.50 1031.3,455.50C1032.8,455.50 1032.8,452.60 1034.3,452.60C1035.8,452.60 1035.8,455.50 1037.3,455.50C1038.8,455.50 1038.8,452.60 1040.3,452.60C1041.8,452.60 1041.8,455.50 1043.3,455.50C1044.8,455.50 1044.8,452.60 1046.3,452.60C1047.8,452.60 1047.8,455.50 1049.3,455.50C1050.8,455.50 1050.8,452.60 1052.3,452.60M1066.5,452.60C1068.0,452.60 1068.0,455.50 1069.5,455.50C1071.0,455.50 1071.0,452.60 1072.5,452.60C1074.0,452.60 1074.0,455.50 1075.5,455.50C1077.0,455.50 1077.0,452.60 1078.5,452.60C1080.0,452.60 1080.0,455.50 1081.5,455.50C1083.0,455.50 1083.0,452.60 1084.5,452.60C1086.0,452.60 1086.0,455.50 1087.5,455.50C1089.0,455.50 1089.0,452.60 1090.5,452.60C1092.0,452.60 1092.0,455.50 1093.5,455.50C1095.0,455.50 1095.0,452.60 1096.5,452.60C1098.0,452.60 1098.0,455.50 1099.5,455.50C1101.0,455.50 1101.0,452.60 1102.5,452.60C1104.0,452.60 1104.0,455.50 1105.5,455.50C1107.0,455.50 1107.0,452.60 1108.5,452.60C1110.0,452.60 1110.0,455.50 1111.5,455.50C1113.0,455.50 1113.0,452.60 1114.5,452.60C1116.0,452.60 1116.0,455.50 1117.5,455.50C1119.0,455.50 1119.0,452.60 1120.5,452.60C1122.0,452.60 1122.0,455.50 1123.5,455.50M1129.1,452.60C1130.6,452.60 1130.6,455.50 1132.1,455.50C1133.6,455.50 1133.6,452.60 1135.1,452.60C1136.6,452.60 1136.6,455.50 1138.1,455.50C1139.6,455.50 1139.6,452.60 1141.1,452.60C1142.6,452.60 1142.6,455.50 1144.1,455.50C1145.6,455.50 1145.6,452.60 1147.1,452.60C1148.6,452.60 1148.6,455.50 1150.1,455.50C1151.6,455.50 1151.6,452.60 1153.1,452.60C1154.6,452.60 1154.6,455.50 1156.1,455.50C1157.6,455.50 1157.6,452.60 1159.1,452.60C1160.6,452.60 1160.6,455.50 1162.1,455.50C1163.6,455.50 1163.6,452.60 1165.1,452.60C1166.6,452.60 1166.6,455.50 1168.1,455.50C1169.6,455.50 1169.6,452.60 1171.1,452.60C1172.6,452.60 1172.6,455.50 1174.1,455.50C1175.6,455.50 1175.6,452.60 1177.1,452.60C1178.6,452.60 1178.6,455.50 1180.1,455.50C1181.6,455.50 1181.6,452.60 1183.1,452.60C1184.6,452.60 1184.6,455.50 1186.1,455.50C1187.6,455.50 1187.6,452.60 1189.1,452.60C1190.6,452.60 1190.6,455.50 1192.1,455.50C1193.6,455.50 1193.6,452.60 1195.1,452.60C1196.6,452.60 1196.6,455.50 1198.1,455.50C1199.6,455.50 1199.6,452.60 1201.1,452.60C1202.6,452.60 1202.6,455.50 1204.1,455.50C1205.6,455.50 1205.6,452.60 1207.1,452.60C1208.6,452.60 1208.6,455.50 1210.1,455.50C1211.6,455.50 1211.6,452.60 1213.1,452.60C1214.6,452.60 1214.6,455.50 1216.1,455.50C1217.6,455.50 1217.6,452.60 1219.1,452.60C1220.6,452.60 1220.6,455.50 1222.1,455.50C1223.6,455.50 1223.6,452.60 1225.1,452.60C1226.6,452.60 1226.6,455.50 1228.1,455.50C1229.6,455.50 1229.6,452.60 1231.1,452.60C1232.6,452.60 1232.6,455.50 1234.1,455.50M1238.9,452.60C1240.4,452.60 1240.4,455.50 1241.9,455.50C1243.4,455.50 1243.4,452.60 1244.9,452.60C1246.4,452.60 1246.4,455.50 1247.9,455.50C1249.4,455.50 1249.4,452.60 1250.9,452.60C1252.4,452.60 1252.4,455.50 1253.9,455.50C1255.4,455.50 1255.4,452.60 1256.9,452.60C1258.4,452.60 1258.4,455.50 1259.9,455.50C1261.4,455.50 1261.4,452.60 1262.9,452.60C1264.4,452.60 1264.4,455.50 1265.9,455.50C1267.4,455.50 1267.4,452.60 1268.9,452.60C1270.4,452.60 1270.4,455.50 1271.9,455.50C1273.4,455.50 1273.4,452.60 1274.9,452.60C1276.4,452.60 1276.4,455.50 1277.9,455.50C1279.4,455.50 1279.4,452.60 1280.9,452.60C1282.4,452.60 1282.4,455.50 1283.9,455.50C1285.4,455.50 1285.4,452.60 1286.9,452.60C1288.4,452.60 1288.4,455.50 1289.9,455.50C1291.4,455.50 1291.4,452.60 1292.9,452.60C1294.4,452.60 1294.4,455.50 1295.9,455.50C1297.4,455.50 1297.4,452.60 1298.9,452.60C1300.4,452.60 1300.4,455.50 1301.9,455.50C1303.4,455.50 1303.4,452.60 1304.9,452.60C1306.4,452.60 1306.4,455.50 1307.9,455.50C1309.4,455.50 1309.4,452.60 1310.9,452.60C1312.4,452.60 1312.4,455.50 1313.9,455.50C1315.4,455.50 1315.4,452.60 1316.9,452.60C1318.4,452.60 1318.4,455.50 1319.9,455.50C1321.4,455.50 1321.4,452.60 1322.9,452.60C1324.4,452.60 1324.4,455.50 1325.9,455.50C1327.4,455.50 1327.4,452.60 1328.9,452.60C1330.4,452.60 1330.4,455.50 1331.9,455.50C1333.4,455.50 1333.4,452.60 1334.9,452.60C1336.4,452.60 1336.4,455.50 1337.9,455.50C1339.4,455.50 1339.4,452.60 1340.9,452.60C1342.4,452.60 1342.4,455.50 1343.9,455.50C1345.4,455.50 1345.4,452.60 1346.9,452.60C1348.4,452.60 1348.4,455.50 1349.9,455.50C1351.4,455.50 1351.4,452.60 1352.9,452.60C1354.4,452.60 1354.4,455.50 1355.9,455.50C1357.4,455.50 1357.4,452.60 1358.9,452.60C1360.4,452.60 1360.4,455.50 1361.9,455.50C1363.4,455.50 1363.4,452.60 1364.9,452.60C1366.4,452.60 1366.4,455.50 1367.9,455.50C1369.4,455.50 1369.4,452.60 1370.9,452.60C1372.4,452.60 1372.4,455.50 1373.9,455.50C1375.4,455.50 1375.4,452.60 1376.9,452.60C1378.4,452.60 1378.4,455.50 1379.9,455.50C1381.4,455.50 1381.4,452.60 1382.9,452.60C1384.4,452.60 1384.4,455.50 1385.9,455.50C1387.4,455.50 1387.4,452.60 1388.9,452.60C1390.4,452.60 1390.4,455.50 1391.9,455.50C1393.4,455.50 1393.4,452.60 1394.9,452.60M1400.5,452.60C1402.0,452.60 1402.0,455.50 1403.5,455.50C1405.0,455.50 1405.0,452.60 1406.5,452.60C1408.0,452.60 1408.0,455.50 1409.5,455.50C1411.0,455.50 1411.0,452.60 1412.5,452.60C1414.0,452.60 1414.0,455.50 1415.5,455.50C1417.0,455.50 1417.0,452.60 1418.5,452.60C1420.0,452.60 1420.0,455.50 1421.5,455.50C1423.0,455.50 1423.0,452.60 1424.5,452.60C1426.0,452.60 1426.0,455.50 1427.5,455.50C1429.0,455.50 1429.0,452.60 1430.5,452.60C1432.0,452.60 1432.0,455.50 1433.5,455.50C1435.0,455.50 1435.0,452.60 1436.5,452.60C1438.0,452.60 1438.0,455.50 1439.5,455.50C1441.0,455.50 1441.0,452.60 1442.5,452.60C1444.0,452.60 1444.0,455.50 1445.5,455.50C1447.0,455.50 1447.0,452.60 1448.5,452.60C1450.0,452.60 1450.0,455.50 1451.5,455.50C1453.0,455.50 1453.0,452.60 1454.5,452.60C1456.0,452.60 1456.0,455.50 1457.5,455.50C1459.0,455.50 1459.0,452.60 1460.5,452.60C1462.0,452.60 1462.0,455.50 1463.5,455.50C1465.0,455.50 1465.0,452.60 1466.5,452.60C1468.0,452.60 1468.0,455.50 1469.5,455.50C1471.0,455.50 1471.0,452.60 1472.5,452.60C1474.0,452.60 1474.0,455.50 1475.5,455.50C1477.0,455.50 1477.0,452.60 1478.5,452.60C1480.0,452.60 1480.0,455.50 1481.5,455.50C1483.0,455.50 1483.0,452.60 1484.5,452.60C1486.0,452.60 1486.0,455.50 1487.5,455.50C1489.0,455.50 1489.0,452.60 1490.5,452.60C1492.0,452.60 1492.0,455.50 1493.5,455.50C1495.0,455.50 1495.0,452.60 1496.5,452.60C1498.0,452.60 1498.0,455.50 1499.5,455.50C1501.0,455.50 1501.0,452.60 1502.5,452.60C1504.0,452.60 1504.0,455.50 1505.5,455.50M307.9,493.70C309.4,493.70 309.4,496.60 310.9,496.60C312.4,496.60 312.4,493.70 313.9,493.70C315.4,493.70 315.4,496.60 316.9,496.60C318.4,496.60 318.4,493.70 319.9,493.70C321.4,493.70 321.4,496.60 322.9,496.60C324.4,496.60 324.4,493.70 325.9,493.70C327.4,493.70 327.4,496.60 328.9,496.60C330.4,496.60 330.4,493.70 331.9,493.70C333.4,493.70 333.4,496.60 334.9,496.60C336.4,496.60 336.4,493.70 337.9,493.70C339.4,493.70 339.4,496.60 340.9,496.60C342.4,496.60 342.4,493.70 343.9,493.70C345.4,493.70 345.4,496.60 346.9,496.60C348.4,496.60 348.4,493.70 349.9,493.70C351.4,493.70 351.4,496.60 352.9,496.60C354.4,496.60 354.4,493.70 355.9,493.70C357.4,493.70 357.4,496.60 358.9,496.60C360.4,496.60 360.4,493.70 361.9,493.70C363.4,493.70 363.4,496.60 364.9,496.60C366.4,496.60 366.4,493.70 367.9,493.70C369.4,493.70 369.4,496.60 370.9,496.60C372.4,496.60 372.4,493.70 373.9,493.70C375.4,493.70 375.4,496.60 376.9,496.60C378.4,496.60 378.4,493.70 379.9,493.70C381.4,493.70 381.4,496.60 382.9,496.60C384.4,496.60 384.4,493.70 385.9,493.70C387.4,493.70 387.4,496.60 388.9,496.60C390.4,496.60 390.4,493.70 391.9,493.70C393.4,493.70 393.4,496.60 394.9,496.60C396.4,496.60 396.4,493.70 397.9,493.70C399.4,493.70 399.4,496.60 400.9,496.60M403.7,493.70C405.2,493.70 405.2,496.60 406.7,496.60C408.2,496.60 408.2,493.70 409.7,493.70C411.2,493.70 411.2,496.60 412.7,496.60C414.2,496.60 414.2,493.70 415.7,493.70C417.2,493.70 417.2,496.60 418.7,496.60C420.2,496.60 420.2,493.70 421.7,493.70C423.2,493.70 423.2,496.60 424.7,496.60C426.2,496.60 426.2,493.70 427.7,493.70C429.2,493.70 429.2,496.60 430.7,496.60C432.2,496.60 432.2,493.70 433.7,493.70C435.2,493.70 435.2,496.60 436.7,496.60C438.2,496.60 438.2,493.70 439.7,493.70C441.2,493.70 441.2,496.60 442.7,496.60C444.2,496.60 444.2,493.70 445.7,493.70C447.2,493.70 447.2,496.60 448.7,496.60C450.2,496.60 450.2,493.70 451.7,493.70M490.0,493.70C491.5,493.70 491.5,496.60 493.0,496.60C494.5,496.60 494.5,493.70 496.0,493.70C497.5,493.70 497.5,496.60 499.0,496.60C500.5,496.60 500.5,493.70 502.0,493.70C503.5,493.70 503.5,496.60 505.0,496.60C506.5,496.60 506.5,493.70 508.0,493.70C509.5,493.70 509.5,496.60 511.0,496.60C512.5,496.60 512.5,493.70 514.0,493.70C515.5,493.70 515.5,496.60 517.0,496.60C518.5,496.60 518.5,493.70 520.0,493.70C521.5,493.70 521.5,496.60 523.0,496.60C524.5,496.60 524.5,493.70 526.0,493.70C527.5,493.70 527.5,496.60 529.0,496.60C530.5,496.60 530.5,493.70 532.0,493.70C533.5,493.70 533.5,496.60 535.0,496.60C536.5,496.60 536.5,493.70 538.0,493.70C539.5,493.70 539.5,496.60 541.0,496.60C542.5,496.60 542.5,493.70 544.0,493.70C545.5,493.70 545.5,496.60 547.0,496.60C548.5,496.60 548.5,493.70 550.0,493.70C551.5,493.70 551.5,496.60 553.0,496.60C554.5,496.60 554.5,493.70 556.0,493.70C557.5,493.70 557.5,496.60 559.0,496.60C560.5,496.60 560.5,493.70 562.0,493.70C563.5,493.70 563.5,496.60 565.0,496.60C566.5,496.60 566.5,493.70 568.0,493.70C569.5,493.70 569.5,496.60 571.0,496.60C572.5,496.60 572.5,493.70 574.0,493.70C575.5,493.70 575.5,496.60 577.0,496.60C578.5,496.60 578.5,493.70 580.0,493.70M661.5,493.70C663.0,493.70 663.0,496.60 664.5,496.60C666.0,496.60 666.0,493.70 667.5,493.70C669.0,493.70 669.0,496.60 670.5,496.60C672.0,496.60 672.0,493.70 673.5,493.70C675.0,493.70 675.0,496.60 676.5,496.60C678.0,496.60 678.0,493.70 679.5,493.70C681.0,493.70 681.0,496.60 682.5,496.60C684.0,496.60 684.0,493.70 685.5,493.70C687.0,493.70 687.0,496.60 688.5,496.60C690.0,496.60 690.0,493.70 691.5,493.70C693.0,493.70 693.0,496.60 694.5,496.60C696.0,496.60 696.0,493.70 697.5,493.70C699.0,493.70 699.0,496.60 700.5,496.60C702.0,496.60 702.0,493.70 703.5,493.70C705.0,493.70 705.0,496.60 706.5,496.60C708.0,496.60 708.0,493.70 709.5,493.70C711.0,493.70 711.0,496.60 712.5,496.60C714.0,496.60 714.0,493.70 715.5,493.70C717.0,493.70 717.0,496.60 718.5,496.60C720.0,496.60 720.0,493.70 721.5,493.70C723.0,493.70 723.0,496.60 724.5,496.60C726.0,496.60 726.0,493.70 727.5,493.70C729.0,493.70 729.0,496.60 730.5,496.60C732.0,496.60 732.0,493.70 733.5,493.70C735.0,493.70 735.0,496.60 736.5,496.60C738.0,496.60 738.0,493.70 739.5,493.70C741.0,493.70 741.0,496.60 742.5,496.60C744.0,496.60 744.0,493.70 745.5,493.70C747.0,493.70 747.0,496.60 748.5,496.60C750.0,496.60 750.0,493.70 751.5,493.70C753.0,493.70 753.0,496.60 754.5,496.60C756.0,496.60 756.0,493.70 757.5,493.70C759.0,493.70 759.0,496.60 760.5,496.60C762.0,496.60 762.0,493.70 763.5,493.70C765.0,493.70 765.0,496.60 766.5,496.60C768.0,496.60 768.0,493.70 769.5,493.70C771.0,493.70 771.0,496.60 772.5,496.60C774.0,496.60 774.0,493.70 775.5,493.70C777.0,493.70 777.0,496.60 778.5,496.60C780.0,496.60 780.0,493.70 781.5,493.70C783.0,493.70 783.0,496.60 784.5,496.60C786.0,496.60 786.0,493.70 787.5,493.70C789.0,493.70 789.0,496.60 790.5,496.60C792.0,496.60 792.0,493.70 793.5,493.70C795.0,493.70 795.0,496.60 796.5,496.60M801.6,493.70C803.1,493.70 803.1,496.60 804.6,496.60C806.1,496.60 806.1,493.70 807.6,493.70C809.1,493.70 809.1,496.60 810.6,496.60C812.1,496.60 812.1,493.70 813.6,493.70C815.1,493.70 815.1,496.60 816.6,496.60C818.1,496.60 818.1,493.70 819.6,493.70C821.1,493.70 821.1,496.60 822.6,496.60C824.1,496.60 824.1,493.70 825.6,493.70C827.1,493.70 827.1,496.60 828.6,496.60C830.1,496.60 830.1,493.70 831.6,493.70C833.1,493.70 833.1,496.60 834.6,496.60C836.1,496.60 836.1,493.70 837.6,493.70C839.1,493.70 839.1,496.60 840.6,496.60C842.1,496.60 842.1,493.70 843.6,493.70C845.1,493.70 845.1,496.60 846.6,496.60C848.1,496.60 848.1,493.70 849.6,493.70C851.1,493.70 851.1,496.60 852.6,496.60C854.1,496.60 854.1,493.70 855.6,493.70C857.1,493.70 857.1,496.60 858.6,496.60C860.1,496.60 860.1,493.70 861.6,493.70C863.1,493.70 863.1,496.60 864.6,496.60C866.1,496.60 866.1,493.70 867.6,493.70C869.1,493.70 869.1,496.60 870.6,496.60C872.1,496.60 872.1,493.70 873.6,493.70C875.1,493.70 875.1,496.60 876.6,496.60C878.1,496.60 878.1,493.70 879.6,493.70C881.1,493.70 881.1,496.60 882.6,496.60C884.1,496.60 884.1,493.70 885.6,493.70C887.1,493.70 887.1,496.60 888.6,496.60C890.1,496.60 890.1,493.70 891.6,493.70C893.1,493.70 893.1,496.60 894.6,496.60C896.1,496.60 896.1,493.70 897.6,493.70C899.1,493.70 899.1,496.60 900.6,496.60C902.1,496.60 902.1,493.70 903.6,493.70C905.1,493.70 905.1,496.60 906.6,496.60C908.1,496.60 908.1,493.70 909.6,493.70C911.1,493.70 911.1,496.60 912.6,496.60C914.1,496.60 914.1,493.70 915.6,493.70C917.1,493.70 917.1,496.60 918.6,496.60C920.1,496.60 920.1,493.70 921.6,493.70C923.1,493.70 923.1,496.60 924.6,496.60C926.1,496.60 926.1,493.70 927.6,493.70C929.1,493.70 929.1,496.60 930.6,496.60C932.1,496.60 932.1,493.70 933.6,493.70C935.1,493.70 935.1,496.60 936.6,496.60C938.1,496.60 938.1,493.70 939.6,493.70C941.1,493.70 941.1,496.60 942.6,496.60M953.8,493.70C955.3,493.70 955.3,496.60 956.8,496.60C958.3,496.60 958.3,493.70 959.8,493.70C961.3,493.70 961.3,496.60 962.8,496.60C964.3,496.60 964.3,493.70 965.8,493.70C967.3,493.70 967.3,496.60 968.8,496.60C970.3,496.60 970.3,493.70 971.8,493.70C973.3,493.70 973.3,496.60 974.8,496.60C976.3,496.60 976.3,493.70 977.8,493.70C979.3,493.70 979.3,496.60 980.8,496.60C982.3,496.60 982.3,493.70 983.8,493.70C985.3,493.70 985.3,496.60 986.8,496.60C988.3,496.60 988.3,493.70 989.8,493.70C991.3,493.70 991.3,496.60 992.8,496.60C994.3,496.60 994.3,493.70 995.8,493.70C997.3,493.70 997.3,496.60 998.8,496.60C1000.3,496.60 1000.3,493.70 1001.8,493.70C1003.3,493.70 1003.3,496.60 1004.8,496.60C1006.3,496.60 1006.3,493.70 1007.8,493.70C1009.3,493.70 1009.3,496.60 1010.8,496.60C1012.3,496.60 1012.3,493.70 1013.8,493.70M1018.5,493.70C1020.0,493.70 1020.0,496.60 1021.5,496.60C1023.0,496.60 1023.0,493.70 1024.5,493.70C1026.0,493.70 1026.0,496.60 1027.5,496.60C1029.0,496.60 1029.0,493.70 1030.5,493.70C1032.0,493.70 1032.0,496.60 1033.5,496.60C1035.0,496.60 1035.0,493.70 1036.5,493.70C1038.0,493.70 1038.0,496.60 1039.5,496.60C1041.0,496.60 1041.0,493.70 1042.5,493.70C1044.0,493.70 1044.0,496.60 1045.5,496.60C1047.0,496.60 1047.0,493.70 1048.5,493.70C1050.0,493.70 1050.0,496.60 1051.5,496.60C1053.0,496.60 1053.0,493.70 1054.5,493.70C1056.0,493.70 1056.0,496.60 1057.5,496.60C1059.0,496.60 1059.0,493.70 1060.5,493.70C1062.0,493.70 1062.0,496.60 1063.5,496.60C1065.0,496.60 1065.0,493.70 1066.5,493.70C1068.0,493.70 1068.0,496.60 1069.5,496.60C1071.0,496.60 1071.0,493.70 1072.5,493.70C1074.0,493.70 1074.0,496.60 1075.5,496.60C1077.0,496.60 1077.0,493.70 1078.5,493.70M1085.1,493.70C1086.6,493.70 1086.6,496.60 1088.1,496.60C1089.6,496.60 1089.6,493.70 1091.1,493.70C1092.6,493.70 1092.6,496.60 1094.1,496.60C1095.6,496.60 1095.6,493.70 1097.1,493.70C1098.6,493.70 1098.6,496.60 1100.1,496.60C1101.6,496.60 1101.6,493.70 1103.1,493.70C1104.6,493.70 1104.6,496.60 1106.1,496.60C1107.6,496.60 1107.6,493.70 1109.1,493.70C1110.6,493.70 1110.6,496.60 1112.1,496.60C1113.6,496.60 1113.6,493.70 1115.1,493.70C1116.6,493.70 1116.6,496.60 1118.1,496.60C1119.6,496.60 1119.6,493.70 1121.1,493.70C1122.6,493.70 1122.6,496.60 1124.1,496.60C1125.6,496.60 1125.6,493.70 1127.1,493.70C1128.6,493.70 1128.6,496.60 1130.1,496.60C1131.6,496.60 1131.6,493.70 1133.1,493.70C1134.6,493.70 1134.6,496.60 1136.1,496.60C1137.6,496.60 1137.6,493.70 1139.1,493.70C1140.6,493.70 1140.6,496.60 1142.1,496.60C1143.6,496.60 1143.6,493.70 1145.1,493.70C1146.6,493.70 1146.6,496.60 1148.1,496.60C1149.6,496.60 1149.6,493.70 1151.1,493.70M1263.1,493.70C1264.6,493.70 1264.6,496.60 1266.1,496.60C1267.6,496.60 1267.6,493.70 1269.1,493.70C1270.6,493.70 1270.6,496.60 1272.1,496.60C1273.6,496.60 1273.6,493.70 1275.1,493.70C1276.6,493.70 1276.6,496.60 1278.1,496.60C1279.6,496.60 1279.6,493.70 1281.1,493.70C1282.6,493.70 1282.6,496.60 1284.1,496.60C1285.6,496.60 1285.6,493.70 1287.1,493.70C1288.6,493.70 1288.6,496.60 1290.1,496.60C1291.6,496.60 1291.6,493.70 1293.1,493.70C1294.6,493.70 1294.6,496.60 1296.1,496.60C1297.6,496.60 1297.6,493.70 1299.1,493.70C1300.6,493.70 1300.6,496.60 1302.1,496.60C1303.6,496.60 1303.6,493.70 1305.1,493.70C1306.6,493.70 1306.6,496.60 1308.1,496.60C1309.6,496.60 1309.6,493.70 1311.1,493.70C1312.6,493.70 1312.6,496.60 1314.1,496.60C1315.6,496.60 1315.6,493.70 1317.1,493.70C1318.6,493.70 1318.6,496.60 1320.1,496.60C1321.6,496.60 1321.6,493.70 1323.1,493.70C1324.6,493.70 1324.6,496.60 1326.1,496.60C1327.6,496.60 1327.6,493.70 1329.1,493.70C1330.6,493.70 1330.6,496.60 1332.1,496.60C1333.6,496.60 1333.6,493.70 1335.1,493.70C1336.6,493.70 1336.6,496.60 1338.1,496.60C1339.6,496.60 1339.6,493.70 1341.1,493.70C1342.6,493.70 1342.6,496.60 1344.1,496.60C1345.6,496.60 1345.6,493.70 1347.1,493.70C1348.6,493.70 1348.6,496.60 1350.1,496.60C1351.6,496.60 1351.6,493.70 1353.1,493.70C1354.6,493.70 1354.6,496.60 1356.1,496.60C1357.6,496.60 1357.6,493.70 1359.1,493.70C1360.6,493.70 1360.6,496.60 1362.1,496.60C1363.6,496.60 1363.6,493.70 1365.1,493.70C1366.6,493.70 1366.6,496.60 1368.1,496.60C1369.6,496.60 1369.6,493.70 1371.1,493.70C1372.6,493.70 1372.6,496.60 1374.1,496.60C1375.6,496.60 1375.6,493.70 1377.1,493.70C1378.6,493.70 1378.6,496.60 1380.1,496.60C1381.6,496.60 1381.6,493.70 1383.1,493.70C1384.6,493.70 1384.6,496.60 1386.1,496.60C1387.6,496.60 1387.6,493.70 1389.1,493.70C1390.6,493.70 1390.6,496.60 1392.1,496.60C1393.6,496.60 1393.6,493.70 1395.1,493.70C1396.6,493.70 1396.6,496.60 1398.1,496.60C1399.6,496.60 1399.6,493.70 1401.1,493.70C1402.6,493.70 1402.6,496.60 1404.1,496.60C1405.6,496.60 1405.6,493.70 1407.1,493.70C1408.6,493.70 1408.6,496.60 1410.1,496.60C1411.6,496.60 1411.6,493.70 1413.1,493.70C1414.6,493.70 1414.6,496.60 1416.1,496.60C1417.6,496.60 1417.6,493.70 1419.1,493.70C1420.6,493.70 1420.6,496.60 1422.1,496.60C1423.6,496.60 1423.6,493.70 1425.1,493.70C1426.6,493.70 1426.6,496.60 1428.1,496.60C1429.6,496.60 1429.6,493.70 1431.1,493.70C1432.6,493.70 1432.6,496.60 1434.1,496.60C1435.6,496.60 1435.6,493.70 1437.1,493.70C1438.6,493.70 1438.6,496.60 1440.1,496.60C1441.6,496.60 1441.6,493.70 1443.1,493.70C1444.6,493.70 1444.6,496.60 1446.1,496.60C1447.6,496.60 1447.6,493.70 1449.1,493.70M306.7,534.80C308.2,534.80 308.2,537.70 309.7,537.70C311.2,537.70 311.2,534.80 312.7,534.80C314.2,534.80 314.2,537.70 315.7,537.70C317.2,537.70 317.2,534.80 318.7,534.80C320.2,534.80 320.2,537.70 321.7,537.70C323.2,537.70 323.2,534.80 324.7,534.80C326.2,534.80 326.2,537.70 327.7,537.70C329.2,537.70 329.2,534.80 330.7,534.80C332.2,534.80 332.2,537.70 333.7,537.70C335.2,537.70 335.2,534.80 336.7,534.80C338.2,534.80 338.2,537.70 339.7,537.70C341.2,537.70 341.2,534.80 342.7,534.80C344.2,534.80 344.2,537.70 345.7,537.70C347.2,537.70 347.2,534.80 348.7,534.80C350.2,534.80 350.2,537.70 351.7,537.70C353.2,537.70 353.2,534.80 354.7,534.80C356.2,534.80 356.2,537.70 357.7,537.70C359.2,537.70 359.2,534.80 360.7,534.80C362.2,534.80 362.2,537.70 363.7,537.70C365.2,537.70 365.2,534.80 366.7,534.80C368.2,534.80 368.2,537.70 369.7,537.70C371.2,537.70 371.2,534.80 372.7,534.80C374.2,534.80 374.2,537.70 375.7,537.70C377.2,537.70 377.2,534.80 378.7,534.80C380.2,534.80 380.2,537.70 381.7,537.70C383.2,537.70 383.2,534.80 384.7,534.80C386.2,534.80 386.2,537.70 387.7,537.70C389.2,537.70 389.2,534.80 390.7,534.80C392.2,534.80 392.2,537.70 393.7,537.70C395.2,537.70 395.2,534.80 396.7,534.80C398.2,534.80 398.2,537.70 399.7,537.70C401.2,537.70 401.2,534.80 402.7,534.80C404.2,534.80 404.2,537.70 405.7,537.70C407.2,537.70 407.2,534.80 408.7,534.80C410.2,534.80 410.2,537.70 411.7,537.70C413.2,537.70 413.2,534.80 414.7,534.80C416.2,534.80 416.2,537.70 417.7,537.70C419.2,537.70 419.2,534.80 420.7,534.80C422.2,534.80 422.2,537.70 423.7,537.70C425.2,537.70 425.2,534.80 426.7,534.80C428.2,534.80 428.2,537.70 429.7,537.70C431.2,537.70 431.2,534.80 432.7,534.80M437.3,534.80C438.8,534.80 438.8,537.70 440.3,537.70C441.8,537.70 441.8,534.80 443.3,534.80C444.8,534.80 444.8,537.70 446.3,537.70C447.8,537.70 447.8,534.80 449.3,534.80C450.8,534.80 450.8,537.70 452.3,537.70C453.8,537.70 453.8,534.80 455.3,534.80C456.8,534.80 456.8,537.70 458.3,537.70C459.8,537.70 459.8,534.80 461.3,534.80C462.8,534.80 462.8,537.70 464.3,537.70C465.8,537.70 465.8,534.80 467.3,534.80C468.8,534.80 468.8,537.70 470.3,537.70C471.8,537.70 471.8,534.80 473.3,534.80C474.8,534.80 474.8,537.70 476.3,537.70C477.8,537.70 477.8,534.80 479.3,534.80C480.8,534.80 480.8,537.70 482.3,537.70C483.8,537.70 483.8,534.80 485.3,534.80C486.8,534.80 486.8,537.70 488.3,537.70C489.8,537.70 489.8,534.80 491.3,534.80C492.8,534.80 492.8,537.70 494.3,537.70M564.2,534.80C565.7,534.80 565.7,537.70 567.2,537.70C568.7,537.70 568.7,534.80 570.2,534.80C571.7,534.80 571.7,537.70 573.2,537.70C574.7,537.70 574.7,534.80 576.2,534.80C577.7,534.80 577.7,537.70 579.2,537.70C580.7,537.70 580.7,534.80 582.2,534.80C583.7,534.80 583.7,537.70 585.2,537.70C586.7,537.70 586.7,534.80 588.2,534.80C589.7,534.80 589.7,537.70 591.2,537.70C592.7,537.70 592.7,534.80 594.2,534.80C595.7,534.80 595.7,537.70 597.2,537.70C598.7,537.70 598.7,534.80 600.2,534.80C601.7,534.80 601.7,537.70 603.2,537.70C604.7,537.70 604.7,534.80 606.2,534.80C607.7,534.80 607.7,537.70 609.2,537.70C610.7,537.70 610.7,534.80 612.2,534.80C613.7,534.80 613.7,537.70 615.2,537.70C616.7,537.70 616.7,534.80 618.2,534.80C619.7,534.80 619.7,537.70 621.2,537.70C622.7,537.70 622.7,534.80 624.2,534.80C625.7,534.80 625.7,537.70 627.2,537.70C628.7,537.70 628.7,534.80 630.2,534.80C631.7,534.80 631.7,537.70 633.2,537.70C634.7,537.70 634.7,534.80 636.2,534.80C637.7,534.80 637.7,537.70 639.2,537.70C640.7,537.70 640.7,534.80 642.2,534.80C643.7,534.80 643.7,537.70 645.2,537.70M742.0,534.80C743.5,534.80 743.5,537.70 745.0,537.70C746.5,537.70 746.5,534.80 748.0,534.80C749.5,534.80 749.5,537.70 751.0,537.70C752.5,537.70 752.5,534.80 754.0,534.80C755.5,534.80 755.5,537.70 757.0,537.70C758.5,537.70 758.5,534.80 760.0,534.80C761.5,534.80 761.5,537.70 763.0,537.70C764.5,537.70 764.5,534.80 766.0,534.80C767.5,534.80 767.5,537.70 769.0,537.70C770.5,537.70 770.5,534.80 772.0,534.80C773.5,534.80 773.5,537.70 775.0,537.70C776.5,537.70 776.5,534.80 778.0,534.80M782.2,534.80C783.7,534.80 783.7,537.70 785.2,537.70C786.7,537.70 786.7,534.80 788.2,534.80C789.7,534.80 789.7,537.70 791.2,537.70C792.7,537.70 792.7,534.80 794.2,534.80C795.7,534.80 795.7,537.70 797.2,537.70C798.7,537.70 798.7,534.80 800.2,534.80C801.7,534.80 801.7,537.70 803.2,537.70C804.7,537.70 804.7,534.80 806.2,534.80C807.7,534.80 807.7,537.70 809.2,537.70C810.7,537.70 810.7,534.80 812.2,534.80C813.7,534.80 813.7,537.70 815.2,537.70C816.7,537.70 816.7,534.80 818.2,534.80C819.7,534.80 819.7,537.70 821.2,537.70C822.7,537.70 822.7,534.80 824.2,534.80C825.7,534.80 825.7,537.70 827.2,537.70C828.7,537.70 828.7,534.80 830.2,534.80C831.7,534.80 831.7,537.70 833.2,537.70C834.7,537.70 834.7,534.80 836.2,534.80C837.7,534.80 837.7,537.70 839.2,537.70C840.7,537.70 840.7,534.80 842.2,534.80C843.7,534.80 843.7,537.70 845.2,537.70C846.7,537.70 846.7,534.80 848.2,534.80C849.7,534.80 849.7,537.70 851.2,537.70C852.7,537.70 852.7,534.80 854.2,534.80C855.7,534.80 855.7,537.70 857.2,537.70C858.7,537.70 858.7,534.80 860.2,534.80M936.0,534.80C937.5,534.80 937.5,537.70 939.0,537.70C940.5,537.70 940.5,534.80 942.0,534.80C943.5,534.80 943.5,537.70 945.0,537.70C946.5,537.70 946.5,534.80 948.0,534.80C949.5,534.80 949.5,537.70 951.0,537.70C952.5,537.70 952.5,534.80 954.0,534.80C955.5,534.80 955.5,537.70 957.0,537.70C958.5,537.70 958.5,534.80 960.0,534.80C961.5,534.80 961.5,537.70 963.0,537.70C964.5,537.70 964.5,534.80 966.0,534.80C967.5,534.80 967.5,537.70 969.0,537.70C970.5,537.70 970.5,534.80 972.0,534.80C973.5,534.80 973.5,537.70 975.0,537.70C976.5,537.70 976.5,534.80 978.0,534.80C979.5,534.80 979.5,537.70 981.0,537.70C982.5,537.70 982.5,534.80 984.0,534.80C985.5,534.80 985.5,537.70 987.0,537.70C988.5,537.70 988.5,534.80 990.0,534.80C991.5,534.80 991.5,537.70 993.0,537.70C994.5,537.70 994.5,534.80 996.0,534.80C997.5,534.80 997.5,537.70 999.0,537.70C1000.5,537.70 1000.5,534.80 1002.0,534.80C1003.5,534.80 1003.5,537.70 1005.0,537.70C1006.5,537.70 1006.5,534.80 1008.0,534.80C1009.5,534.80 1009.5,537.70 1011.0,537.70C1012.5,537.70 1012.5,534.80 1014.0,534.80C1015.5,534.80 1015.5,537.70 1017.0,537.70C1018.5,537.70 1018.5,534.80 1020.0,534.80C1021.5,534.80 1021.5,537.70 1023.0,537.70C1024.5,537.70 1024.5,534.80 1026.0,534.80C1027.5,534.80 1027.5,537.70 1029.0,537.70C1030.5,537.70 1030.5,534.80 1032.0,534.80C1033.5,534.80 1033.5,537.70 1035.0,537.70C1036.5,537.70 1036.5,534.80 1038.0,534.80C1039.5,534.80 1039.5,537.70 1041.0,537.70C1042.5,537.70 1042.5,534.80 1044.0,534.80M1056.5,534.80C1058.0,534.80 1058.0,537.70 1059.5,537.70C1061.0,537.70 1061.0,534.80 1062.5,534.80C1064.0,534.80 1064.0,537.70 1065.5,537.70C1067.0,537.70 1067.0,534.80 1068.5,534.80C1070.0,534.80 1070.0,537.70 1071.5,537.70C1073.0,537.70 1073.0,534.80 1074.5,534.80C1076.0,534.80 1076.0,537.70 1077.5,537.70C1079.0,537.70 1079.0,534.80 1080.5,534.80C1082.0,534.80 1082.0,537.70 1083.5,537.70C1085.0,537.70 1085.0,534.80 1086.5,534.80C1088.0,534.80 1088.0,537.70 1089.5,537.70C1091.0,537.70 1091.0,534.80 1092.5,534.80C1094.0,534.80 1094.0,537.70 1095.5,537.70C1097.0,537.70 1097.0,534.80 1098.5,534.80C1100.0,534.80 1100.0,537.70 1101.5,537.70C1103.0,537.70 1103.0,534.80 1104.5,534.80C1106.0,534.80 1106.0,537.70 1107.5,537.70C1109.0,537.70 1109.0,534.80 1110.5,534.80C1112.0,534.80 1112.0,537.70 1113.5,537.70C1115.0,537.70 1115.0,534.80 1116.5,534.80C1118.0,534.80 1118.0,537.70 1119.5,537.70C1121.0,537.70 1121.0,534.80 1122.5,534.80C1124.0,534.80 1124.0,537.70 1125.5,537.70C1127.0,537.70 1127.0,534.80 1128.5,534.80C1130.0,534.80 1130.0,537.70 1131.5,537.70C1133.0,537.70 1133.0,534.80 1134.5,534.80C1136.0,534.80 1136.0,537.70 1137.5,537.70C1139.0,537.70 1139.0,534.80 1140.5,534.80C1142.0,534.80 1142.0,537.70 1143.5,537.70C1145.0,537.70 1145.0,534.80 1146.5,534.80C1148.0,534.80 1148.0,537.70 1149.5,537.70C1151.0,537.70 1151.0,534.80 1152.5,534.80C1154.0,534.80 1154.0,537.70 1155.5,537.70C1157.0,537.70 1157.0,534.80 1158.5,534.80C1160.0,534.80 1160.0,537.70 1161.5,537.70C1163.0,537.70 1163.0,534.80 1164.5,534.80C1166.0,534.80 1166.0,537.70 1167.5,537.70C1169.0,537.70 1169.0,534.80 1170.5,534.80C1172.0,534.80 1172.0,537.70 1173.5,537.70C1175.0,537.70 1175.0,534.80 1176.5,534.80C1178.0,534.80 1178.0,537.70 1179.5,537.70C1181.0,537.70 1181.0,534.80 1182.5,534.80C1184.0,534.80 1184.0,537.70 1185.5,537.70C1187.0,537.70 1187.0,534.80 1188.5,534.80M1193.8,534.80C1195.3,534.80 1195.3,537.70 1196.8,537.70C1198.3,537.70 1198.3,534.80 1199.8,534.80C1201.3,534.80 1201.3,537.70 1202.8,537.70C1204.3,537.70 1204.3,534.80 1205.8,534.80C1207.3,534.80 1207.3,537.70 1208.8,537.70C1210.3,537.70 1210.3,534.80 1211.8,534.80C1213.3,534.80 1213.3,537.70 1214.8,537.70C1216.3,537.70 1216.3,534.80 1217.8,534.80C1219.3,534.80 1219.3,537.70 1220.8,537.70C1222.3,537.70 1222.3,534.80 1223.8,534.80C1225.3,534.80 1225.3,537.70 1226.8,537.70C1228.3,537.70 1228.3,534.80 1229.8,534.80C1231.3,534.80 1231.3,537.70 1232.8,537.70C1234.3,537.70 1234.3,534.80 1235.8,534.80C1237.3,534.80 1237.3,537.70 1238.8,537.70C1240.3,537.70 1240.3,534.80 1241.8,534.80C1243.3,534.80 1243.3,537.70 1244.8,537.70M1248.2,534.80C1249.7,534.80 1249.7,537.70 1251.2,537.70C1252.7,537.70 1252.7,534.80 1254.2,534.80C1255.7,534.80 1255.7,537.70 1257.2,537.70C1258.7,537.70 1258.7,534.80 1260.2,534.80C1261.7,534.80 1261.7,537.70 1263.2,537.70C1264.7,537.70 1264.7,534.80 1266.2,534.80C1267.7,534.80 1267.7,537.70 1269.2,537.70C1270.7,537.70 1270.7,534.80 1272.2,534.80C1273.7,534.80 1273.7,537.70 1275.2,537.70C1276.7,537.70 1276.7,534.80 1278.2,534.80C1279.7,534.80 1279.7,537.70 1281.2,537.70C1282.7,537.70 1282.7,534.80 1284.2,534.80C1285.7,534.80 1285.7,537.70 1287.2,537.70C1288.7,537.70 1288.7,534.80 1290.2,534.80C1291.7,534.80 1291.7,537.70 1293.2,537.70C1294.7,537.70 1294.7,534.80 1296.2,534.80C1297.7,534.80 1297.7,537.70 1299.2,537.70C1300.7,537.70 1300.7,534.80 1302.2,534.80C1303.7,534.80 1303.7,537.70 1305.2,537.70C1306.7,537.70 1306.7,534.80 1308.2,534.80C1309.7,534.80 1309.7,537.70 1311.2,537.70C1312.7,537.70 1312.7,534.80 1314.2,534.80C1315.7,534.80 1315.7,537.70 1317.2,537.70C1318.7,537.70 1318.7,534.80 1320.2,534.80C1321.7,534.80 1321.7,537.70 1323.2,537.70C1324.7,537.70 1324.7,534.80 1326.2,534.80C1327.7,534.80 1327.7,537.70 1329.2,537.70C1330.7,537.70 1330.7,534.80 1332.2,534.80C1333.7,534.80 1333.7,537.70 1335.2,537.70C1336.7,537.70 1336.7,534.80 1338.2,534.80C1339.7,534.80 1339.7,537.70 1341.2,537.70C1342.7,537.70 1342.7,534.80 1344.2,534.80C1345.7,534.80 1345.7,537.70 1347.2,537.70C1348.7,537.70 1348.7,534.80 1350.2,534.80C1351.7,534.80 1351.7,537.70 1353.2,537.70C1354.7,537.70 1354.7,534.80 1356.2,534.80C1357.7,534.80 1357.7,537.70 1359.2,537.70C1360.7,537.70 1360.7,534.80 1362.2,534.80C1363.7,534.80 1363.7,537.70 1365.2,537.70M1368.7,534.80C1370.2,534.80 1370.2,537.70 1371.7,537.70C1373.2,537.70 1373.2,534.80 1374.7,534.80C1376.2,534.80 1376.2,537.70 1377.7,537.70C1379.2,537.70 1379.2,534.80 1380.7,534.80C1382.2,534.80 1382.2,537.70 1383.7,537.70C1385.2,537.70 1385.2,534.80 1386.7,534.80C1388.2,534.80 1388.2,537.70 1389.7,537.70C1391.2,537.70 1391.2,534.80 1392.7,534.80C1394.2,534.80 1394.2,537.70 1395.7,537.70C1397.2,537.70 1397.2,534.80 1398.7,534.80C1400.2,534.80 1400.2,537.70 1401.7,537.70C1403.2,537.70 1403.2,534.80 1404.7,534.80C1406.2,534.80 1406.2,537.70 1407.7,537.70C1409.2,537.70 1409.2,534.80 1410.7,534.80C1412.2,534.80 1412.2,537.70 1413.7,537.70C1415.2,537.70 1415.2,534.80 1416.7,534.80C1418.2,534.80 1418.2,537.70 1419.7,537.70C1421.2,537.70 1421.2,534.80 1422.7,534.80C1424.2,534.80 1424.2,537.70 1425.7,537.70C1427.2,537.70 1427.2,534.80 1428.7,534.80C1430.2,534.80 1430.2,537.70 1431.7,537.70C1433.2,537.70 1433.2,534.80 1434.7,534.80C1436.2,534.80 1436.2,537.70 1437.7,537.70C1439.2,537.70 1439.2,534.80 1440.7,534.80C1442.2,534.80 1442.2,537.70 1443.7,537.70C1445.2,537.70 1445.2,534.80 1446.7,534.80C1448.2,534.80 1448.2,537.70 1449.7,537.70C1451.2,537.70 1451.2,534.80 1452.7,534.80C1454.2,534.80 1454.2,537.70 1455.7,537.70C1457.2,537.70 1457.2,534.80 1458.7,534.80C1460.2,534.80 1460.2,537.70 1461.7,537.70C1463.2,537.70 1463.2,534.80 1464.7,534.80C1466.2,534.80 1466.2,537.70 1467.7,537.70C1469.2,537.70 1469.2,534.80 1470.7,534.80C1472.2,534.80 1472.2,537.70 1473.7,537.70C1475.2,537.70 1475.2,534.80 1476.7,534.80C1478.2,534.80 1478.2,537.70 1479.7,537.70C1481.2,537.70 1481.2,534.80 1482.7,534.80C1484.2,534.80 1484.2,537.70 1485.7,537.70C1487.2,537.70 1487.2,534.80 1488.7,534.80C1490.2,534.80 1490.2,537.70 1491.7,537.70C1493.2,537.70 1493.2,534.80 1494.7,534.80M307.9,575.90C309.4,575.90 309.4,578.80 310.9,578.80C312.4,578.80 312.4,575.90 313.9,575.90C315.4,575.90 315.4,578.80 316.9,578.80C318.4,578.80 318.4,575.90 319.9,575.90C321.4,575.90 321.4,578.80 322.9,578.80C324.4,578.80 324.4,575.90 325.9,575.90C327.4,575.90 327.4,578.80 328.9,578.80C330.4,578.80 330.4,575.90 331.9,575.90C333.4,575.90 333.4,578.80 334.9,578.80C336.4,578.80 336.4,575.90 337.9,575.90C339.4,575.90 339.4,578.80 340.9,578.80C342.4,578.80 342.4,575.90 343.9,575.90C345.4,575.90 345.4,578.80 346.9,578.80C348.4,578.80 348.4,575.90 349.9,575.90C351.4,575.90 351.4,578.80 352.9,578.80C354.4,578.80 354.4,575.90 355.9,575.90C357.4,575.90 357.4,578.80 358.9,578.80C360.4,578.80 360.4,575.90 361.9,575.90C363.4,575.90 363.4,578.80 364.9,578.80C366.4,578.80 366.4,575.90 367.9,575.90C369.4,575.90 369.4,578.80 370.9,578.80C372.4,578.80 372.4,575.90 373.9,575.90C375.4,575.90 375.4,578.80 376.9,578.80C378.4,578.80 378.4,575.90 379.9,575.90C381.4,575.90 381.4,578.80 382.9,578.80C384.4,578.80 384.4,575.90 385.9,575.90C387.4,575.90 387.4,578.80 388.9,578.80C390.4,578.80 390.4,575.90 391.9,575.90C393.4,575.90 393.4,578.80 394.9,578.80C396.4,578.80 396.4,575.90 397.9,575.90C399.4,575.90 399.4,578.80 400.9,578.80C402.4,578.80 402.4,575.90 403.9,575.90C405.4,575.90 405.4,578.80 406.9,578.80C408.4,578.80 408.4,575.90 409.9,575.90C411.4,575.90 411.4,578.80 412.9,578.80C414.4,578.80 414.4,575.90 415.9,575.90C417.4,575.90 417.4,578.80 418.9,578.80C420.4,578.80 420.4,575.90 421.9,575.90M433.7,575.90C435.2,575.90 435.2,578.80 436.7,578.80C438.2,578.80 438.2,575.90 439.7,575.90C441.2,575.90 441.2,578.80 442.7,578.80C444.2,578.80 444.2,575.90 445.7,575.90C447.2,575.90 447.2,578.80 448.7,578.80C450.2,578.80 450.2,575.90 451.7,575.90C453.2,575.90 453.2,578.80 454.7,578.80C456.2,578.80 456.2,575.90 457.7,575.90C459.2,575.90 459.2,578.80 460.7,578.80C462.2,578.80 462.2,575.90 463.7,575.90C465.2,575.90 465.2,578.80 466.7,578.80C468.2,578.80 468.2,575.90 469.7,575.90C471.2,575.90 471.2,578.80 472.7,578.80C474.2,578.80 474.2,575.90 475.7,575.90C477.2,575.90 477.2,578.80 478.7,578.80C480.2,578.80 480.2,575.90 481.7,575.90C483.2,575.90 483.2,578.80 484.7,578.80C486.2,578.80 486.2,575.90 487.7,575.90C489.2,575.90 489.2,578.80 490.7,578.80C492.2,578.80 492.2,575.90 493.7,575.90C495.2,575.90 495.2,578.80 496.7,578.80M743.0,575.90C744.5,575.90 744.5,578.80 746.0,578.80C747.5,578.80 747.5,575.90 749.0,575.90C750.5,575.90 750.5,578.80 752.0,578.80C753.5,578.80 753.5,575.90 755.0,575.90C756.5,575.90 756.5,578.80 758.0,578.80C759.5,578.80 759.5,575.90 761.0,575.90C762.5,575.90 762.5,578.80 764.0,578.80C765.5,578.80 765.5,575.90 767.0,575.90C768.5,575.90 768.5,578.80 770.0,578.80C771.5,578.80 771.5,575.90 773.0,575.90C774.5,575.90 774.5,578.80 776.0,578.80C777.5,578.80 777.5,575.90 779.0,575.90C780.5,575.90 780.5,578.80 782.0,578.80C783.5,578.80 783.5,575.90 785.0,575.90C786.5,575.90 786.5,578.80 788.0,578.80C789.5,578.80 789.5,575.90 791.0,575.90C792.5,575.90 792.5,578.80 794.0,578.80C795.5,578.80 795.5,575.90 797.0,575.90C798.5,575.90 798.5,578.80 800.0,578.80C801.5,578.80 801.5,575.90 803.0,575.90C804.5,575.90 804.5,578.80 806.0,578.80C807.5,578.80 807.5,575.90 809.0,575.90C810.5,575.90 810.5,578.80 812.0,578.80C813.5,578.80 813.5,575.90 815.0,575.90C816.5,575.90 816.5,578.80 818.0,578.80C819.5,578.80 819.5,575.90 821.0,575.90C822.5,575.90 822.5,578.80 824.0,578.80C825.5,578.80 825.5,575.90 827.0,575.90C828.5,575.90 828.5,578.80 830.0,578.80C831.5,578.80 831.5,575.90 833.0,575.90C834.5,575.90 834.5,578.80 836.0,578.80C837.5,578.80 837.5,575.90 839.0,575.90C840.5,575.90 840.5,578.80 842.0,578.80C843.5,578.80 843.5,575.90 845.0,575.90C846.5,575.90 846.5,578.80 848.0,578.80C849.5,578.80 849.5,575.90 851.0,575.90C852.5,575.90 852.5,578.80 854.0,578.80C855.5,578.80 855.5,575.90 857.0,575.90C858.5,575.90 858.5,578.80 860.0,578.80C861.5,578.80 861.5,575.90 863.0,575.90M868.8,575.90C870.3,575.90 870.3,578.80 871.8,578.80C873.3,578.80 873.3,575.90 874.8,575.90C876.3,575.90 876.3,578.80 877.8,578.80C879.3,578.80 879.3,575.90 880.8,575.90C882.3,575.90 882.3,578.80 883.8,578.80C885.3,578.80 885.3,575.90 886.8,575.90C888.3,575.90 888.3,578.80 889.8,578.80C891.3,578.80 891.3,575.90 892.8,575.90C894.3,575.90 894.3,578.80 895.8,578.80C897.3,578.80 897.3,575.90 898.8,575.90C900.3,575.90 900.3,578.80 901.8,578.80C903.3,578.80 903.3,575.90 904.8,575.90C906.3,575.90 906.3,578.80 907.8,578.80C909.3,578.80 909.3,575.90 910.8,575.90C912.3,575.90 912.3,578.80 913.8,578.80C915.3,578.80 915.3,575.90 916.8,575.90C918.3,575.90 918.3,578.80 919.8,578.80C921.3,578.80 921.3,575.90 922.8,575.90C924.3,575.90 924.3,578.80 925.8,578.80C927.3,578.80 927.3,575.90 928.8,575.90C930.3,575.90 930.3,578.80 931.8,578.80C933.3,578.80 933.3,575.90 934.8,575.90C936.3,575.90 936.3,578.80 937.8,578.80C939.3,578.80 939.3,575.90 940.8,575.90C942.3,575.90 942.3,578.80 943.8,578.80M949.5,575.90C951.0,575.90 951.0,578.80 952.5,578.80C954.0,578.80 954.0,575.90 955.5,575.90C957.0,575.90 957.0,578.80 958.5,578.80C960.0,578.80 960.0,575.90 961.5,575.90C963.0,575.90 963.0,578.80 964.5,578.80C966.0,578.80 966.0,575.90 967.5,575.90C969.0,575.90 969.0,578.80 970.5,578.80C972.0,578.80 972.0,575.90 973.5,575.90C975.0,575.90 975.0,578.80 976.5,578.80C978.0,578.80 978.0,575.90 979.5,575.90C981.0,575.90 981.0,578.80 982.5,578.80C984.0,578.80 984.0,575.90 985.5,575.90C987.0,575.90 987.0,578.80 988.5,578.80C990.0,578.80 990.0,575.90 991.5,575.90C993.0,575.90 993.0,578.80 994.5,578.80C996.0,578.80 996.0,575.90 997.5,575.90C999.0,575.90 999.0,578.80 1000.5,578.80C1002.0,578.80 1002.0,575.90 1003.5,575.90C1005.0,575.90 1005.0,578.80 1006.5,578.80C1008.0,578.80 1008.0,575.90 1009.5,575.90C1011.0,575.90 1011.0,578.80 1012.5,578.80C1014.0,578.80 1014.0,575.90 1015.5,575.90C1017.0,575.90 1017.0,578.80 1018.5,578.80M1100.5,575.90C1102.0,575.90 1102.0,578.80 1103.5,578.80C1105.0,578.80 1105.0,575.90 1106.5,575.90C1108.0,575.90 1108.0,578.80 1109.5,578.80C1111.0,578.80 1111.0,575.90 1112.5,575.90C1114.0,575.90 1114.0,578.80 1115.5,578.80C1117.0,578.80 1117.0,575.90 1118.5,575.90C1120.0,575.90 1120.0,578.80 1121.5,578.80C1123.0,578.80 1123.0,575.90 1124.5,575.90C1126.0,575.90 1126.0,578.80 1127.5,578.80C1129.0,578.80 1129.0,575.90 1130.5,575.90C1132.0,575.90 1132.0,578.80 1133.5,578.80C1135.0,578.80 1135.0,575.90 1136.5,575.90C1138.0,575.90 1138.0,578.80 1139.5,578.80C1141.0,578.80 1141.0,575.90 1142.5,575.90C1144.0,575.90 1144.0,578.80 1145.5,578.80C1147.0,578.80 1147.0,575.90 1148.5,575.90C1150.0,575.90 1150.0,578.80 1151.5,578.80C1153.0,578.80 1153.0,575.90 1154.5,575.90C1156.0,575.90 1156.0,578.80 1157.5,578.80C1159.0,578.80 1159.0,575.90 1160.5,575.90C1162.0,575.90 1162.0,578.80 1163.5,578.80C1165.0,578.80 1165.0,575.90 1166.5,575.90C1168.0,575.90 1168.0,578.80 1169.5,578.80C1171.0,578.80 1171.0,575.90 1172.5,575.90C1174.0,575.90 1174.0,578.80 1175.5,578.80C1177.0,578.80 1177.0,575.90 1178.5,575.90C1180.0,575.90 1180.0,578.80 1181.5,578.80C1183.0,578.80 1183.0,575.90 1184.5,575.90C1186.0,575.90 1186.0,578.80 1187.5,578.80C1189.0,578.80 1189.0,575.90 1190.5,575.90C1192.0,575.90 1192.0,578.80 1193.5,578.80C1195.0,578.80 1195.0,575.90 1196.5,575.90C1198.0,575.90 1198.0,578.80 1199.5,578.80C1201.0,578.80 1201.0,575.90 1202.5,575.90C1204.0,575.90 1204.0,578.80 1205.5,578.80C1207.0,578.80 1207.0,575.90 1208.5,575.90C1210.0,575.90 1210.0,578.80 1211.5,578.80"/><rect x="1210.6" y="545" width="1.2" height="37.5" fill="#000"/></svg>
<svg style="position:absolute;left:0;top:0" width="1920" height="950"><path d="M32,42.3 V50 H39.8 M32.5,49.5 L37.6,44.4 A6.2,6.2 0 0 1 46.4,53.2 L38,61.6" fill="none" stroke="#424242" stroke-width="1.6"/><path d="M60.2,50.9 L63.4,53.9 L66.5,50.9" fill="none" stroke="#242424" stroke-width="1.3" stroke-linecap="round" stroke-linejoin="round"/><path d="M45.2,75.8 A9,9 0 1 1 35.2,76.2 M30,74.5 H37 V81.4" fill="none" stroke="#A3A3A3" stroke-width="1.5"/><rect x="107.8" y="48.7" width="25.1" height="29.4" fill="#FFF" stroke="#E3801C" stroke-width="1.6"/><rect x="109.8" y="50.7" width="21.1" height="25.4" fill="#F7F7F7" stroke="#F7DA8C" stroke-width="1.7"/><path d="M112.8,53 V47.6 H116.2 A4.2,4.2 0 0 1 124.6,47.6 H128 V53 Z" fill="#F7F7F7" stroke="#767676" stroke-width="1.4"/><rect x="124" y="59.2" width="16.4" height="20.9" fill="#F8F8F8" stroke="#4A4A4A" stroke-width="1.5"/><path d="M117.4,113.0 L120.3,115.6 L123.2,113.0" fill="none" stroke="#242424" stroke-width="1.3" stroke-linecap="round" stroke-linejoin="round"/><path d="M160.5,42.5 L166.2,56.8 M167.5,42.5 L161.8,56.8" fill="none" stroke="#9A9A9A" stroke-width="1.1"/><circle cx="160.2" cy="59" r="2.1" fill="none" stroke="#9A9A9A" stroke-width="1.1"/><circle cx="167.6" cy="59" r="2.1" fill="none" stroke="#9A9A9A" stroke-width="1.1"/><path d="M154.8,74.6 H161.5 L163.5,76.6 V91 H154.8 Z" fill="#F0F0F0" stroke="#A5A5A5" stroke-width="1.2"/><path d="M162.2,78.2 H169.4 L173.4,82.2 V93 H162.2 Z" fill="#F0F0F0" stroke="#A5A5A5" stroke-width="1.2"/><path d="M169.4,78.2 V82.2 H173.4" fill="none" stroke="#A5A5A5" stroke-width="1.1"/><path d="M164.6,86.6 H171 M164.6,89.2 H171" stroke="#A5A5A5" stroke-width="1"/><path d="M154.8,114.6 Q158.4,111.8 162,110.9 L169.3,118.2 Q165.8,121.2 162.8,123.8 Z" fill="#FFF" stroke="#E07A1F" stroke-width="1.5" stroke-linejoin="round"/><path d="M158.2,117.4 L166.6,120.2 L162.8,123.2 Z" fill="#F8D98A"/><path d="M155.4,115 L167.4,119.8" stroke="#E07A1F" stroke-width="1.2"/><path d="M162,110.9 L164.6,108.3 L171.7,115.5 L169.2,118 Z" fill="#FFF" stroke="#333" stroke-width="1.4" stroke-linejoin="round"/><path d="M166.6,110.4 L171.8,105.2 A1.6,1.6 0 0 1 174.1,107.5 L168.9,112.7" fill="#FFF" stroke="#333" stroke-width="1.4"/><path d="M174.4,149.4 V140.6 H183.2 M177.0,143.2 L183.0,149.2 M183.2,144.6 V149.4 H178.4" fill="none" stroke="#262626" stroke-width="1.2"/><path d="M560.6,149.4 V140.6 H569.4 M563.2,143.2 L569.2,149.2 M569.4,144.6 V149.4 H564.6" fill="none" stroke="#262626" stroke-width="1.2"/><path d="M1456.4,149.4 V140.6 H1465.2 M1459.0,143.2 L1465.0,149.2 M1465.2,144.6 V149.4 H1460.4" fill="none" stroke="#262626" stroke-width="1.2"/><path d="M869.4,149.4 V140.6 H878.2 M872.0,143.2 L878.0,149.2 M878.2,144.6 V149.4 H873.4" fill="none" stroke="#262626" stroke-width="1.2"/><path d="M328.5,61.1 L331.4,64.6 L334.3,61.1" fill="none" stroke="#242424" stroke-width="1.3" stroke-linecap="round" stroke-linejoin="round"/><path d="M400.3,61.1 L403.4,64.6 L406.4,61.1" fill="none" stroke="#242424" stroke-width="1.3" stroke-linecap="round" stroke-linejoin="round"/><path d="M419.8,68.3 L426.05,52.4 L432.3,68.3 M422.2,62.2 H429.9" fill="none" stroke="#333" stroke-width="1.35"/><path d="M432.4,56.2 L434.9,53.7 L437.4,56.2" fill="none" stroke="#2A88D6" stroke-width="1.5"/><path d="M453.8,68.3 L458.6,56.1 L463.4,68.3 M455.6,64.2 H461.6" fill="none" stroke="#333" stroke-width="1.35"/><path d="M464.5,53.7 L467,56.2 L469.5,53.7" fill="none" stroke="#2A88D6" stroke-width="1.5"/><path d="M486.2,68.3 L490.5,56.3 L494.8,68.3 M487.8,64.2 H493.2" fill="none" stroke="#333" stroke-width="1.35"/><text x="497.8" y="68.3" font-family="Liberation Sans" font-size="17.4" fill="#333" textLength="7.2" lengthAdjust="spacingAndGlyphs">a</text><path d="M513.4,61.1 L516.5,64.2 L519.5,61.1" fill="none" stroke="#242424" stroke-width="1.3" stroke-linecap="round" stroke-linejoin="round"/><path d="M540.6,68.3 L545.55,52.4 L550.5,66 M542.6,62.2 H549.2" fill="none" stroke="#333" stroke-width="1.35"/><path d="M548.8,66.6 L555.2,60.6 L559.2,64.8 L552.8,70.8 Z" fill="#FFF" stroke="#9B3FC1" stroke-width="1.5" stroke-linejoin="round"/><path d="M549.4,67.4 L552.2,64.6 L555.6,68.2 L552.8,70.8 Z" fill="#C99BDD"/><text x="207.6" y="107" font-family="Liberation Sans" font-weight="700" font-size="17.6" fill="#333">G</text><text x="240" y="107" font-family="Liberation Sans" font-style="italic" font-size="17.4" fill="#333" textLength="11.4" lengthAdjust="spacingAndGlyphs">C</text><text x="272.6" y="107" font-family="Liberation Sans" font-size="17" fill="#333">S</text><rect x="273.1" y="108.3" width="9.9" height="1.4" fill="#333"/><path d="M298.3,100.6 L301.4,104.0 L304.5,100.6" fill="none" stroke="#242424" stroke-width="1.3" stroke-linecap="round" stroke-linejoin="round"/><text x="320.6" y="108" font-family="Liberation Sans" font-size="16.4" fill="#333" textLength="15.6" lengthAdjust="spacingAndGlyphs">ab</text><rect x="319.2" y="103.2" width="19.8" height="1.3" fill="#333"/><text x="356.3" y="107" font-family="Liberation Sans" font-weight="700" font-size="15.5" fill="#333">x</text><text x="365.4" y="111.9" font-family="Liberation Sans" font-weight="700" font-size="9" fill="#2A88D6">2</text><text x="388.8" y="107" font-family="Liberation Sans" font-weight="700" font-size="15.5" fill="#333">x</text><text x="397.7" y="98.7" font-family="Liberation Sans" font-weight="700" font-size="9" fill="#2A88D6">2</text><defs><clipPath id="teclip"><rect x="415" y="91.6" width="26" height="19.2"/></clipPath></defs><g clip-path="url(#teclip)"><path d="M419.6,113 L427.95,92.4 L436.3,113 M423.2,104.6 H432.7" fill="none" stroke="#1F6FC6" stroke-width="5.4" stroke-linejoin="bevel"/><path d="M420.2,113 L427.95,94 L435.7,113 M423.6,104.6 H432.3" fill="none" stroke="#FFF" stroke-width="1"/></g><path d="M446.2,100.6 L449.2,104.1 L452.3,100.6" fill="none" stroke="#242424" stroke-width="1.3" stroke-linecap="round" stroke-linejoin="round"/><path d="M477.4,100.8 L485.4,92.8 A2.2,2.2 0 0 1 488.6,96 L480.6,104 Z" fill="#FFF" stroke="#333" stroke-width="1.3" stroke-linejoin="round"/><path d="M471.6,105.6 L474.8,101.2 L477.2,100.6 L480.8,104.2 L480.2,105.6 Z" fill="#777"/><rect x="470" y="106.9" width="20.1" height="5" fill="#FFFF00"/><path d="M500.2,100.6 L503.3,104.1 L506.4,100.6" fill="none" stroke="#242424" stroke-width="1.3" stroke-linecap="round" stroke-linejoin="round"/><path d="M525.8,105.5 L531.1,92.5 L536.4,105.5 M527.7,101 H534.5" fill="none" stroke="#333" stroke-width="1.3"/><rect x="520.9" y="106.9" width="20.2" height="5" fill="#F00000"/><path d="M551.0,100.6 L554.2,104.1 L557.4,100.6" fill="none" stroke="#242424" stroke-width="1.3" stroke-linecap="round" stroke-linejoin="round"/><rect x="590" y="51.9" width="3.9" height="3.9" fill="#2A88D6"/><rect x="596.3" y="53.2" width="12.6" height="1.4" fill="#555"/><rect x="590" y="59.3" width="3.9" height="3.9" fill="#2A88D6"/><rect x="596.3" y="60.6" width="12.6" height="1.4" fill="#555"/><rect x="590" y="67.0" width="3.9" height="3.9" fill="#2A88D6"/><rect x="596.3" y="68.3" width="12.6" height="1.4" fill="#555"/><path d="M620.3,61.1 L623.3,64.1 L626.4,61.1" fill="none" stroke="#242424" stroke-width="1.3" stroke-linecap="round" stroke-linejoin="round"/><text x="640.6" y="57.2" font-family="Liberation Sans" font-weight="700" font-size="8.6" fill="#2A88D6">1</text><rect x="647.2" y="53.2" width="12.6" height="1.4" fill="#555"/><text x="640.6" y="64.6" font-family="Liberation Sans" font-weight="700" font-size="8.6" fill="#2A88D6">2</text><rect x="647.2" y="60.6" width="12.6" height="1.4" fill="#555"/><text x="640.6" y="72.3" font-family="Liberation Sans" font-weight="700" font-size="8.6" fill="#2A88D6">3</text><rect x="647.2" y="68.3" width="12.6" height="1.4" fill="#555"/><path d="M671.5,61.1 L674.4,64.1 L677.3,61.1" fill="none" stroke="#242424" stroke-width="1.3" stroke-linecap="round" stroke-linejoin="round"/><text x="692" y="57.2" font-family="Liberation Sans" font-weight="700" font-size="8.6" fill="#2A88D6">1</text><rect x="698.4" y="53.2" width="12.5" height="1.4" fill="#555"/><text x="694.8" y="64.6" font-family="Liberation Sans" font-weight="700" font-size="8.6" fill="#2A88D6">a</text><rect x="702.3" y="60.6" width="8.6" height="1.4" fill="#555"/><text x="701.6" y="72.3" font-family="Liberation Sans" font-weight="700" font-size="8.6" fill="#2A88D6">i</text><rect x="705.8" y="68.3" width="5.1" height="1.4" fill="#555"/><path d="M720.3,61.1 L723.3,64.1 L726.4,61.1" fill="none" stroke="#242424" stroke-width="1.3" stroke-linecap="round" stroke-linejoin="round"/><rect x="748.2" y="53.1" width="17.7" height="1.4" fill="#555"/><rect x="758.4" y="58.2" width="7.5" height="1.4" fill="#555"/><rect x="758.4" y="63.2" width="7.5" height="1.4" fill="#555"/><rect x="748.2" y="68.3" width="17.7" height="1.4" fill="#555"/><path d="M755.8,61.3 H749 M751.8,58.4 L748.9,61.3 L751.8,64.2" fill="none" stroke="#2A88D6" stroke-width="1.4"/><rect x="780.1" y="53.1" width="17.9" height="1.4" fill="#555"/><rect x="790.3" y="58.2" width="7.7" height="1.4" fill="#555"/><rect x="790.3" y="63.2" width="7.7" height="1.4" fill="#555"/><rect x="780.1" y="68.3" width="17.9" height="1.4" fill="#555"/><path d="M780.1,61.3 H787 M784.2,58.4 L787.1,61.3 L784.2,64.2" fill="none" stroke="#2A88D6" stroke-width="1.4"/><text x="813.6" y="60.9" font-family="Liberation Sans" font-weight="700" font-size="12" fill="#2A88D6">A</text><text x="813.8" y="72" font-family="Liberation Sans" font-size="12" fill="#333">Z</text><path d="M829.6,52 V71.2 M825.6,67.4 L829.6,71.4 L833.6,67.4" fill="none" stroke="#333" stroke-width="1.2"/><path d="M858.2,54.6 H865 M858.6,54.8 V69.6 M862.6,54.8 V69.6" fill="none" stroke="#333" stroke-width="1.5"/><path d="M859.2,54.5 A4.2,4.2 0 0 0 859.2,63 Z" fill="#333"/><rect x="585.7" y="87.6" width="28.6" height="28.8" rx="5" fill="#EBEBEB" stroke="#616161" stroke-width="1.3"/><rect x="591.1" y="93.0" width="17.9" height="1.5" fill="#555"/><rect x="591.1" y="98.2" width="12.8" height="1.5" fill="#555"/><rect x="591.1" y="103.0" width="17.9" height="1.5" fill="#555"/><rect x="591.1" y="108.2" width="12.8" height="1.5" fill="#555"/><rect x="623.2" y="93.0" width="17.7" height="1.5" fill="#555"/><rect x="625.9" y="98.2" width="12.4" height="1.5" fill="#555"/><rect x="623.2" y="103.0" width="17.7" height="1.5" fill="#555"/><rect x="625.9" y="108.2" width="12.4" height="1.5" fill="#555"/><rect x="655.1" y="93.0" width="17.9" height="1.5" fill="#555"/><rect x="660.2" y="98.2" width="12.8" height="1.5" fill="#555"/><rect x="655.1" y="103.0" width="17.9" height="1.5" fill="#555"/><rect x="660.2" y="108.2" width="12.8" height="1.5" fill="#555"/><rect x="687.1" y="93.0" width="17.9" height="1.5" fill="#555"/><rect x="687.1" y="98.2" width="17.9" height="1.5" fill="#555"/><rect x="687.1" y="103.0" width="17.9" height="1.5" fill="#555"/><rect x="687.1" y="108.2" width="17.9" height="1.5" fill="#555"/><rect x="730" y="93.0" width="11" height="1.5" fill="#555"/><rect x="730" y="98.0" width="11" height="1.5" fill="#555"/><rect x="730" y="103.0" width="11" height="1.5" fill="#555"/><rect x="730" y="108.0" width="11" height="1.5" fill="#555"/><path d="M724,94 V99.4 M721.2,96.8 L724,94 L726.8,96.8 M724,103.2 V110.2 M721.2,107.4 L724,110.2 L726.8,107.4" fill="none" stroke="#2A88D6" stroke-width="1.4"/><path d="M749.3,101.3 L752.3,103.6 L755.3,101.3" fill="none" stroke="#242424" stroke-width="1.3" stroke-linecap="round" stroke-linejoin="round"/><rect x="776" y="106.9" width="19.8" height="4.8" fill="#D2DAE4"/><path d="M779.6,100 L785.6,94 L791.6,100 L785.6,106 Z" fill="#F8F8F8" stroke="#222" stroke-width="1.3" stroke-linejoin="round"/><path d="M786.2,98.4 V93.2 A1,1 0 0 1 788,93.2 V97" fill="none" stroke="#444" stroke-width="1.3"/><path d="M790.2,97.4 Q792.6,95.2 793.6,97.6 L793.8,103.8" fill="none" stroke="#1B65C0" stroke-width="1.6" stroke-linecap="round"/><path d="M806.3,101.3 L809.3,103.6 L812.4,101.3" fill="none" stroke="#242424" stroke-width="1.3" stroke-linecap="round" stroke-linejoin="round"/><path d="M827.6,92.6 H845.6 M827.6,92.6 V110 M845.6,92.6 V110 M836.6,92.6 V110 M827.6,101.4 H845.6" fill="none" stroke="#444" stroke-width="1.1" stroke-dasharray="1.2,1.3"/><rect x="827" y="109.5" width="19.2" height="1.7" fill="#3A3A3A"/><path d="M857.2,101.3 L860.2,103.6 L863.3,101.3" fill="none" stroke="#242424" stroke-width="1.3" stroke-linecap="round" stroke-linejoin="round"/><path d="M1444.4,60.6 L1447.6,57.4 L1450.8,60.6" fill="none" stroke="#BDBDBD" stroke-width="1.1"/><path d="M1444.4,83.6 L1447.6,86.8 L1450.8,83.6" fill="none" stroke="#333" stroke-width="1.2"/><path d="M1443.4,104.2 H1451.8 M1444.4,106.8 L1447.6,110 L1450.8,106.8" fill="none" stroke="#333" stroke-width="1"/><circle cx="1499.1" cy="48.8" r="6.2" fill="#FAFAFA" stroke="#424242" stroke-width="1.4"/><path d="M1494.6,53.4 L1487.4,60.6" stroke="#424242" stroke-width="1.5"/><path d="M1563.3,51.0 L1566.3,54.1 L1569.3,51.0" fill="none" stroke="#242424" stroke-width="1.3" stroke-linecap="round" stroke-linejoin="round"/><text x="1492.4" y="83.6" font-family="Liberation Sans" font-weight="700" font-size="12.6" fill="#B146C2">b</text><text x="1497.6" y="94.1" font-family="Liberation Sans" font-weight="700" font-size="12.6" fill="#2A88D6">c</text><path d="M1491.4,80.8 Q1487.6,85.2 1490.4,88.4 Q1492,89.8 1495.8,89.6 M1493.4,87 L1496,89.6 L1493.4,92.2" fill="none" stroke="#2A88D6" stroke-width="1.4" stroke-linecap="round"/><path d="M1488.8,107 V124 L1492.4,120.2 L1495,125.4 L1497.4,124.2 L1495,119.4 L1500.6,119.4 Z" fill="#FFF" stroke="#424242" stroke-width="1.3" stroke-linejoin="round"/><path d="M1580.7,114.3 L1583.6,117.0 L1586.5,114.3" fill="none" stroke="#242424" stroke-width="1.3" stroke-linecap="round" stroke-linejoin="round"/><rect x="1647.2" y="42.7" width="13.2" height="25.6" rx="6.6" fill="#85BEEA" stroke="#0F6CBD" stroke-width="1.4"/><path d="M1643.2,61 A10.7,10.7 0 0 0 1664.6,61 M1653.9,72.2 V79.8" fill="none" stroke="#424242" stroke-width="1.5"/><path d="M1737,52 H1750 A3.1,3.1 0 0 1 1750,58.3 H1733 Z M1731,61.2 H1743.6 A3,3 0 0 1 1743.6,67.2 H1727 Z M1724,69.8 H1737 A3,3 0 0 1 1737,75.8 H1720 Z" fill="#185ABD"/><path d="M1716,79 L1718,71.2 L1738.6,45.4 L1743.2,49.2 L1722.8,75 Z" fill="#F7F7F7" stroke="#185ABD" stroke-width="1.3" stroke-linejoin="round"/><path d="M1736.4,47 L1739.4,42.6 L1745.6,47.4 L1742.4,51.4 Z" fill="#185ABD"/><path d="M1715.4,79.6 L1717.6,74.2 L1721.2,76.6 Z" fill="#185ABD"/><path d="M1888.2,137.6 L1892.4,141.8 L1896.6,137.6" fill="none" stroke="#242424" stroke-width="1.5"/><path d="M1655.3,7.5 H1667.7 V15.4 H1660.6 L1657,19 V15.4 H1655.3 Z" fill="none" stroke="#242424" stroke-width="1.2" stroke-linejoin="round"/><path d="M1786.5,12.4 V20.4 H1798 V15.8" fill="none" stroke="#FFF" stroke-width="1.3"/><path d="M1788.9,15.6 Q1789.6,9.6 1795.4,9.3 V6.6 L1799.9,11.3 L1795.4,15.7 V13.2 Q1791.2,13 1788.9,15.6 Z" fill="none" stroke="#FFF" stroke-width="1.1" stroke-linejoin="round"/><path d="M1891.2,12.6 L1894.5,15.9 L1897.8,12.6" fill="none" stroke="#FFF" stroke-width="1.3"/><path d="M190.9,947.8 V934.8 H198.4 V947.8 Z M198.4,934.8 H206 V941.2" fill="none" stroke="#424242" stroke-width="1.3"/><path d="M199.2,942.2 L207.4,950.4 M207.4,942.2 L199.2,950.4" stroke="#333" stroke-width="1"/><circle cx="591.7" cy="935.8" r="1.9" fill="none" stroke="#242424" stroke-width="1.1"/><path d="M585,937.4 Q585.8,939.4 589.6,939.8 Q589.8,944 588.4,948.6 M598.6,937.4 Q598,939.4 594.2,939.8 V943.4" fill="none" stroke="#242424" stroke-width="1.1"/><path d="M592.2,946.4 L596,949.6 L602.2,943.4" fill="none" stroke="#242424" stroke-width="1.1"/><path d="M1479.6,936.8 V933.8 H1482.6 M1493.4,933.8 H1496.4 V936.8 M1496.4,946 V949 H1493.4 M1482.6,949 H1479.6 V946" fill="none" stroke="#333" stroke-width="1.2"/><path d="M1483.6,936.8 H1489.6 L1492.6,939.8 V947.4 H1483.6 Z M1489.6,936.8 V939.8 H1492.6" fill="none" stroke="#242424" stroke-width="1.2" stroke-linejoin="round"/><path d="M1564.6,934.2 H1572.4 V948.4 H1564.6 Z M1572.4,934.2 H1580.2 V948.4 H1572.4 Z" fill="none" stroke="#333" stroke-width="1.2"/><path d="M1566.4,937.4 H1570.6 M1566.4,940 H1570.6 M1566.4,942.6 H1570.6 M1566.4,945.2 H1570.6 M1574.2,937.4 H1578.4 M1574.2,940 H1578.4 M1574.2,942.6 H1578.4 M1574.2,945.2 H1578.4" stroke="#555" stroke-width="1"/><path d="M1615.7,933.8 H1628.7 V950.4 H1615.7 Z" fill="none" stroke="#333" stroke-width="1.2"/><path d="M1617.8,936.8 H1626.6 M1617.8,939.4 H1626.6 M1617.8,942 H1626.6 M1617.8,944.6 H1626.6 M1617.8,947.2 H1626.6" stroke="#555" stroke-width="1"/><path d="M1677,945 V933.8 H1664.6 V949.6 H1672" fill="none" stroke="#333" stroke-width="1.2"/><path d="M1666.6,936.8 H1675 M1666.6,939.4 H1675 M1666.6,942 H1671 M1666.6,944.6 H1670" stroke="#555" stroke-width="1"/><circle cx="1677.4" cy="946.4" r="4.4" fill="#F4F4F4" stroke="#333" stroke-width="1.1"/><path d="M1673,946.4 H1681.8 M1677.4,942 V950.8" stroke="#333" stroke-width="0.9"/><ellipse cx="1677.4" cy="946.4" rx="2" ry="4.4" fill="none" stroke="#333" stroke-width="0.9"/><rect x="1705" y="940.6" width="9.4" height="1.2" fill="#424242"/><rect x="1721" y="941.8" width="125" height="1.2" fill="#5F5F5F"/><rect x="1783" y="939" width="1.1" height="7" fill="#5F5F5F"/><rect x="1790" y="935.1" width="5.8" height="13.8" fill="#6A6A6A"/><path d="M1852,941.6 H1861.4 M1856.7,937.1 V946.2" stroke="#424242" stroke-width="1.2"/></svg>
</body></html>
